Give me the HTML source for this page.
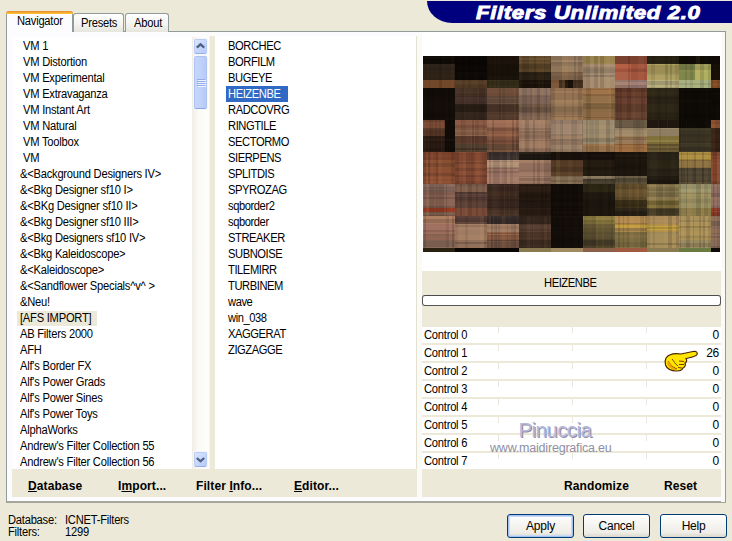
<!DOCTYPE html>
<html><head><meta charset="utf-8"><style>
*{margin:0;padding:0;box-sizing:border-box}
html,body{width:732px;height:541px;overflow:hidden;background:#ECE9D8;font-family:"Liberation Sans",sans-serif;font-size:12px;letter-spacing:-0.25px;color:#000}
.a{position:absolute}
.pv i{position:absolute;display:block}
.banner{position:absolute;left:427px;top:1px;width:305px;height:22px;background:#00007E;border-bottom-left-radius:25px 22px}
.btitle{position:absolute;left:476px;top:0.5px;height:24px;line-height:24px;color:#fff;font-weight:bold;font-style:italic;font-size:19px;white-space:nowrap;letter-spacing:0.5px;transform:scaleX(1.175);transform-origin:0 50%;-webkit-text-stroke:0.9px #fff}
.pane{position:absolute;left:6px;top:31px;width:720px;height:472px;background:#FCFCFE;border:1px solid #919B9C;border-bottom:2px solid #A7A69C}
.tab{position:absolute;top:13px;height:19px;border:1px solid #919B9C;border-bottom:none;border-radius:3px 3px 0 0;background:linear-gradient(#FFFFFF,#F3F3EF 60%,#E6E5DE)}
.tabsel{position:absolute;left:6px;top:11px;width:67px;height:21px;background:#FCFCFE;border:1px solid #919B9C;border-bottom:none;border-top:none;border-radius:3px 3px 0 0}
.tabsel:before{content:"";position:absolute;left:-1px;right:-1px;top:0;height:3px;background:linear-gradient(#E68B2C,#FFC83C);border-radius:3px 3px 0 0}
.tt{position:absolute;white-space:nowrap;line-height:13px;transform:scaleX(0.93);transform-origin:0 0}
.list{position:absolute;background:#fff}
.li{position:absolute;white-space:nowrap;line-height:16px;height:16px;transform:scaleX(0.93);transform-origin:0 0}
.m{left:228px;letter-spacing:-0.45px}
.sel{position:absolute;left:226px;width:62px;height:16px;background:#316AC5}
.sel2{position:absolute;left:17px;width:80px;height:15px;background:#ECE9D8}
.track{position:absolute;left:192px;top:37px;width:17px;height:432px;background:linear-gradient(90deg,#F0EEE6,#FBFAF6 40%,#FEFEFB)}
.sbtn{position:absolute;left:194px;width:13px;height:15px;box-shadow:0 0 0 1px #F4F6FC;border:1px solid #B9CCF6;border-bottom-color:#98B0EA;border-radius:2px;background:linear-gradient(135deg,#DCE6FE,#C3D4FB 60%,#B8CCF8)}
.thumb{position:absolute;left:194px;top:56px;width:13px;height:53px;box-shadow:0 0 0 1px #F4F6FC;border:1px solid #B0C4F4;border-bottom-color:#8EA8E8;border-radius:2px;background:linear-gradient(90deg,#C6D6FC,#C0D2FB 50%,#B6CAF8)}
.b{font-weight:bold;position:absolute;white-space:nowrap;line-height:13px;letter-spacing:0.1px}
.u{text-decoration:underline}
.crow{position:absolute;left:422px;width:299px;height:16px;background:#fff}
.ctl{position:absolute;left:424px;line-height:16px;white-space:nowrap;transform:scaleX(0.93);transform-origin:0 0}
.cval{position:absolute;right:13px;line-height:16px;white-space:nowrap}
.btn{position:absolute;top:514px;width:67px;height:24px;border:1px solid #003C74;border-radius:3px;background:linear-gradient(#FFFFFF,#F6F5F1 40%,#EEEDE7 80%,#DCD7CC);text-align:center;line-height:23px}
</style></head><body>
<div class="banner"></div>
<div class="btitle">Filters Unlimited 2.0</div>

<div class="pane"></div>
<div class="tab" style="left:73px;width:51px"></div>
<div class="tab" style="left:125px;width:44px"></div>
<div class="tabsel"></div>
<div class="tt" style="left:17px;top:15px">Navigator</div>
<div class="tt" style="left:81px;top:17px">Presets</div>
<div class="tt" style="left:134px;top:17px">About</div>

<div class="list" style="left:13px;top:37px;width:196px;height:432px"></div>
<div class="li" style="top:38px;left:23px">VM 1</div>
<div class="li" style="top:54px;left:23px">VM Distortion</div>
<div class="li" style="top:70px;left:23px">VM Experimental</div>
<div class="li" style="top:86px;left:23px">VM Extravaganza</div>
<div class="li" style="top:102px;left:23px">VM Instant Art</div>
<div class="li" style="top:118px;left:23px">VM Natural</div>
<div class="li" style="top:134px;left:23px">VM Toolbox</div>
<div class="li" style="top:150px;left:23px">VM</div>
<div class="li" style="top:166px;left:20px">&amp;&lt;Background Designers IV&gt;</div>
<div class="li" style="top:182px;left:20px">&amp;&lt;Bkg Designer sf10 I&gt;</div>
<div class="li" style="top:198px;left:20px">&amp;&lt;BKg Designer sf10 II&gt;</div>
<div class="li" style="top:214px;left:20px">&amp;&lt;Bkg Designer sf10 III&gt;</div>
<div class="li" style="top:230px;left:20px">&amp;&lt;Bkg Designers sf10 IV&gt;</div>
<div class="li" style="top:246px;left:20px">&amp;&lt;Bkg Kaleidoscope&gt;</div>
<div class="li" style="top:262px;left:20px">&amp;&lt;Kaleidoscope&gt;</div>
<div class="li" style="top:278px;left:20px">&amp;&lt;Sandflower Specials^v^ &gt;</div>
<div class="li" style="top:294px;left:20px">&amp;Neu!</div>
<div class="sel2" style="top:311px"></div>
<div class="li" style="top:310px;left:20px">[AFS IMPORT]</div>
<div class="li" style="top:326px;left:20px">AB Filters 2000</div>
<div class="li" style="top:342px;left:20px">AFH</div>
<div class="li" style="top:358px;left:20px">Alf's Border FX</div>
<div class="li" style="top:374px;left:20px">Alf's Power Grads</div>
<div class="li" style="top:390px;left:20px">Alf's Power Sines</div>
<div class="li" style="top:406px;left:20px">Alf's Power Toys</div>
<div class="li" style="top:422px;left:20px">AlphaWorks</div>
<div class="li" style="top:438px;left:20px">Andrew's Filter Collection 55</div>
<div class="li" style="top:454px;left:20px">Andrew's Filter Collection 56</div>
<div class="track"></div>
<div class="sbtn" style="top:39px"><svg width="18" height="16" style="position:absolute;left:-2px;top:-1px"><polyline points="3.8,8.6 7.5,5.3 11.2,8.6" fill="none" stroke="#4D6185" stroke-width="2.3"/></svg></div>
<div class="thumb"><div style="position:absolute;left:2px;top:22px;width:8px;height:1px;background:#94ADEA;box-shadow:1px 1px 0 #EEF3FE"></div><div style="position:absolute;left:2px;top:24px;width:8px;height:1px;background:#94ADEA;box-shadow:1px 1px 0 #EEF3FE"></div><div style="position:absolute;left:2px;top:26px;width:8px;height:1px;background:#94ADEA;box-shadow:1px 1px 0 #EEF3FE"></div><div style="position:absolute;left:2px;top:28px;width:8px;height:1px;background:#94ADEA;box-shadow:1px 1px 0 #EEF3FE"></div></div>
<div class="sbtn" style="top:452px"><svg width="18" height="16" style="position:absolute;left:-2px;top:-1px"><polyline points="3.8,6.0 7.5,9.3 11.2,6.0" fill="none" stroke="#4D6185" stroke-width="2.3"/></svg></div>

<div class="a" style="left:209px;top:36px;width:6px;height:433px;background:#ECE9D8"></div>
<div class="a" style="left:209px;top:36px;width:1px;height:433px;background:#F4F3EC"></div>

<div class="list" style="left:215px;top:36px;width:202px;height:433px"></div>
<div class="li m" style="top:38px">BORCHEC</div>
<div class="li m" style="top:54px">BORFILM</div>
<div class="li m" style="top:70px">BUGEYE</div>
<div class="sel" style="top:86px"></div>
<div class="li m" style="top:86px;color:#fff">HEIZENBE</div>
<div class="li m" style="top:102px">RADCOVRG</div>
<div class="li m" style="top:118px">RINGTILE</div>
<div class="li m" style="top:134px">SECTORMO</div>
<div class="li m" style="top:150px">SIERPENS</div>
<div class="li m" style="top:166px">SPLITDIS</div>
<div class="li m" style="top:182px">SPYROZAG</div>
<div class="li m" style="top:198px">sqborder2</div>
<div class="li m" style="top:214px">sqborder</div>
<div class="li m" style="top:230px">STREAKER</div>
<div class="li m" style="top:246px">SUBNOISE</div>
<div class="li m" style="top:262px">TILEMIRR</div>
<div class="li m" style="top:278px">TURBINEM</div>
<div class="li m" style="top:294px">wave</div>
<div class="li m" style="top:310px">win_038</div>
<div class="li m" style="top:326px">XAGGERAT</div>
<div class="li m" style="top:342px">ZIGZAGGE</div>
<div class="a" style="left:416px;top:36px;width:1px;height:433px;background:#E4E1D0"></div>

<div class="a" style="left:12px;top:469px;width:405px;height:28px;background:#ECE9D8"></div>
<div class="b" style="left:28px;top:480px"><span class="u">D</span>atabase</div>
<div class="b" style="left:118px;top:480px">I<span class="u">m</span>port...</div>
<div class="b" style="left:196px;top:480px">Filter <span class="u">I</span>nfo...</div>
<div class="b" style="left:294px;top:480px"><span class="u">E</span>ditor...</div>

<div class="a" style="left:417px;top:36px;width:6px;height:461px;background:#FAFAF6"></div>
<div class="a" style="left:422px;top:32px;width:299px;height:239px;background:#fff"></div>
<div class="a pv" style="left:423px;top:56px;width:297px;height:196px;background:#3a2a1c;overflow:hidden">
<i style="left:0px;top:0px;width:32px;height:8px;background:#0E0A06"></i><i style="left:0px;top:8px;width:32px;height:8px;background:#30241A"></i><i style="left:0px;top:16px;width:32px;height:8px;background:#2E2216"></i><i style="left:0px;top:24px;width:32px;height:8px;background:#72482A"></i><i style="left:0px;top:0px;width:32px;height:32px;background:linear-gradient(90deg,transparent 0px 2px,transparent 2px 5px,rgba(255,190,110,0.018) 5px 6px,rgba(0,0,0,0.08) 6px 7px,transparent 7px 11px,transparent 11px 15px,transparent 15px 16px,rgba(0,0,0,0.12) 16px 19px,transparent 19px 20px,rgba(255,190,110,0.018) 20px 21px,transparent 21px 24px,transparent 24px 28px,rgba(255,190,110,0.018) 28px 30px,rgba(255,190,110,0.018) 30px 31px,rgba(0,0,0,0.12) 31px 35px)"></i><i style="left:0px;top:0px;width:32px;height:32px;background:linear-gradient(180deg,transparent 0px 1px,rgba(255,190,110,0.018) 1px 2px,rgba(0,0,0,0.08) 2px 4px,transparent 4px 7px,transparent 7px 11px,rgba(0,0,0,0.08) 11px 15px,transparent 15px 19px,rgba(255,190,110,0.018) 19px 20px,transparent 20px 24px,transparent 24px 26px,transparent 26px 30px,transparent 30px 34px)"></i><i style="left:32px;top:0px;width:32px;height:16px;background:#0A0604"></i><i style="left:32px;top:16px;width:32px;height:8px;background:#0C0806"></i><i style="left:32px;top:24px;width:32px;height:8px;background:#5A4028"></i><i style="left:32px;top:0px;width:32px;height:32px;background:linear-gradient(90deg,transparent 0px 4px,rgba(255,190,110,0.009) 4px 7px,rgba(0,0,0,0.08) 7px 10px,rgba(255,190,110,0.009) 10px 13px,rgba(0,0,0,0.08) 13px 16px,transparent 16px 18px,transparent 18px 20px,rgba(255,190,110,0.009) 20px 21px,rgba(255,190,110,0.009) 21px 23px,rgba(0,0,0,0.08) 23px 26px,rgba(0,0,0,0.08) 26px 29px,transparent 29px 33px)"></i><i style="left:32px;top:0px;width:32px;height:32px;background:linear-gradient(180deg,rgba(255,190,110,0.009) 0px 1px,transparent 1px 4px,transparent 4px 6px,rgba(0,0,0,0.12) 6px 9px,transparent 9px 10px,rgba(255,190,110,0.009) 10px 14px,rgba(0,0,0,0.08) 14px 16px,rgba(255,190,110,0.009) 16px 18px,rgba(255,190,110,0.009) 18px 21px,transparent 21px 24px,rgba(0,0,0,0.08) 24px 25px,transparent 25px 28px,rgba(0,0,0,0.08) 28px 29px,rgba(0,0,0,0.12) 29px 33px)"></i><i style="left:64px;top:0px;width:32px;height:8px;background:#1E140C"></i><i style="left:64px;top:8px;width:32px;height:16px;background:#1A120A"></i><i style="left:64px;top:24px;width:32px;height:8px;background:#38301A"></i><i style="left:64px;top:0px;width:32px;height:32px;background:linear-gradient(90deg,rgba(0,0,0,0.12) 0px 2px,transparent 2px 4px,rgba(0,0,0,0.08) 4px 7px,rgba(255,190,110,0.009) 7px 9px,rgba(0,0,0,0.12) 9px 10px,transparent 10px 11px,transparent 11px 13px,rgba(0,0,0,0.12) 13px 15px,rgba(0,0,0,0.12) 15px 18px,transparent 18px 19px,rgba(0,0,0,0.12) 19px 22px,rgba(0,0,0,0.08) 22px 26px,rgba(0,0,0,0.12) 26px 28px,rgba(0,0,0,0.08) 28px 32px)"></i><i style="left:64px;top:0px;width:32px;height:32px;background:linear-gradient(180deg,rgba(0,0,0,0.08) 0px 3px,transparent 3px 6px,transparent 6px 8px,transparent 8px 10px,transparent 10px 12px,rgba(0,0,0,0.12) 12px 13px,transparent 13px 17px,rgba(0,0,0,0.08) 17px 19px,transparent 19px 20px,rgba(255,190,110,0.009) 20px 23px,rgba(255,190,110,0.009) 23px 25px,rgba(0,0,0,0.08) 25px 29px,rgba(255,190,110,0.009) 29px 31px,transparent 31px 35px)"></i><i style="left:96px;top:0px;width:32px;height:8px;background:#6A5030"></i><i style="left:96px;top:8px;width:32px;height:8px;background:#5A4428"></i><i style="left:96px;top:16px;width:32px;height:8px;background:#2A2014"></i><i style="left:96px;top:24px;width:32px;height:8px;background:#1A120A"></i><i style="left:96px;top:0px;width:32px;height:32px;background:linear-gradient(90deg,rgba(255,190,110,0.025) 0px 3px,rgba(0,0,0,0.12) 3px 6px,rgba(0,0,0,0.12) 6px 9px,rgba(0,0,0,0.12) 9px 10px,transparent 10px 13px,transparent 13px 15px,rgba(0,0,0,0.12) 15px 17px,transparent 17px 19px,rgba(255,190,110,0.025) 19px 21px,transparent 21px 22px,rgba(255,190,110,0.025) 22px 23px,rgba(255,190,110,0.025) 23px 25px,rgba(0,0,0,0.08) 25px 26px,transparent 26px 30px,transparent 30px 31px,rgba(0,0,0,0.12) 31px 35px)"></i><i style="left:96px;top:0px;width:32px;height:32px;background:linear-gradient(180deg,rgba(0,0,0,0.08) 0px 2px,rgba(255,190,110,0.025) 2px 4px,rgba(0,0,0,0.12) 4px 6px,transparent 6px 7px,rgba(0,0,0,0.12) 7px 10px,rgba(0,0,0,0.12) 10px 13px,transparent 13px 15px,transparent 15px 17px,rgba(0,0,0,0.08) 17px 19px,transparent 19px 22px,transparent 22px 26px,rgba(255,190,110,0.025) 26px 28px,transparent 28px 30px,transparent 30px 34px)"></i><i style="left:128px;top:0px;width:32px;height:8px;background:#9C8064"></i><i style="left:128px;top:8px;width:32px;height:8px;background:#9A7E60"></i><i style="left:128px;top:16px;width:32px;height:8px;background:#7A6048"></i><i style="left:128px;top:24px;width:32px;height:8px;background:#4A3422"></i><i style="left:128px;top:24px;width:8px;height:8px;background:#8A6040"></i><i style="left:142px;top:24px;width:8px;height:8px;background:#1A1008"></i><i style="left:128px;top:0px;width:32px;height:32px;background:linear-gradient(90deg,rgba(0,0,0,0.08) 0px 4px,rgba(0,0,0,0.08) 4px 5px,rgba(0,0,0,0.08) 5px 9px,rgba(0,0,0,0.08) 9px 11px,rgba(255,190,110,0.06) 11px 13px,rgba(255,190,110,0.06) 13px 17px,transparent 17px 19px,transparent 19px 23px,rgba(0,0,0,0.12) 23px 25px,transparent 25px 27px,rgba(0,0,0,0.12) 27px 31px,transparent 31px 33px)"></i><i style="left:128px;top:0px;width:32px;height:32px;background:linear-gradient(180deg,rgba(0,0,0,0.08) 0px 1px,rgba(0,0,0,0.08) 1px 4px,rgba(255,190,110,0.06) 4px 6px,rgba(0,0,0,0.12) 6px 8px,rgba(0,0,0,0.08) 8px 10px,transparent 10px 11px,transparent 11px 12px,transparent 12px 15px,transparent 15px 17px,rgba(255,190,110,0.06) 17px 20px,transparent 20px 24px,rgba(0,0,0,0.08) 24px 27px,transparent 27px 28px,transparent 28px 31px,transparent 31px 34px)"></i><i style="left:160px;top:0px;width:32px;height:8px;background:#9A8450"></i><i style="left:160px;top:8px;width:32px;height:16px;background:#A48C72"></i><i style="left:160px;top:24px;width:32px;height:8px;background:#A28A70"></i><i style="left:160px;top:0px;width:32px;height:32px;background:linear-gradient(90deg,rgba(0,0,0,0.08) 0px 3px,rgba(0,0,0,0.12) 3px 4px,rgba(0,0,0,0.12) 4px 7px,transparent 7px 8px,transparent 8px 10px,transparent 10px 11px,rgba(0,0,0,0.12) 11px 15px,rgba(255,190,110,0.06) 15px 17px,rgba(0,0,0,0.12) 17px 21px,transparent 21px 23px,rgba(255,190,110,0.06) 23px 27px,transparent 27px 29px,transparent 29px 30px,transparent 30px 34px)"></i><i style="left:160px;top:0px;width:32px;height:32px;background:linear-gradient(180deg,transparent 0px 3px,transparent 3px 5px,transparent 5px 7px,rgba(255,190,110,0.06) 7px 9px,rgba(255,190,110,0.06) 9px 11px,rgba(0,0,0,0.08) 11px 13px,rgba(0,0,0,0.12) 13px 17px,transparent 17px 19px,rgba(0,0,0,0.12) 19px 21px,rgba(255,190,110,0.06) 21px 25px,rgba(255,190,110,0.06) 25px 28px,rgba(255,190,110,0.06) 28px 30px,rgba(255,190,110,0.06) 30px 32px)"></i><i style="left:192px;top:0px;width:32px;height:8px;background:#7A4030"></i><i style="left:192px;top:8px;width:32px;height:8px;background:#B05A42"></i><i style="left:192px;top:16px;width:32px;height:8px;background:#A85A46"></i><i style="left:192px;top:24px;width:32px;height:8px;background:#A48072"></i><i style="left:208px;top:8px;width:16px;height:16px;background:#9A4C3A"></i><i style="left:208px;top:24px;width:16px;height:8px;background:#9A7A76"></i><i style="left:192px;top:0px;width:32px;height:32px;background:linear-gradient(90deg,transparent 0px 4px,transparent 4px 7px,transparent 7px 11px,transparent 11px 13px,rgba(0,0,0,0.12) 13px 15px,transparent 15px 19px,transparent 19px 23px,rgba(255,190,110,0.06) 23px 25px,rgba(255,190,110,0.06) 25px 29px,transparent 29px 32px)"></i><i style="left:192px;top:0px;width:32px;height:32px;background:linear-gradient(180deg,transparent 0px 4px,transparent 4px 6px,transparent 6px 8px,rgba(255,190,110,0.06) 8px 9px,rgba(255,190,110,0.06) 9px 12px,transparent 12px 13px,rgba(0,0,0,0.08) 13px 16px,rgba(255,190,110,0.06) 16px 20px,rgba(255,190,110,0.06) 20px 24px,rgba(0,0,0,0.08) 24px 26px,rgba(255,190,110,0.06) 26px 29px,rgba(0,0,0,0.12) 29px 33px)"></i><i style="left:224px;top:0px;width:32px;height:8px;background:#2A2414"></i><i style="left:224px;top:8px;width:32px;height:8px;background:#B0A060"></i><i style="left:224px;top:16px;width:32px;height:8px;background:#AEA062"></i><i style="left:224px;top:24px;width:32px;height:8px;background:#B6AE7E"></i><i style="left:224px;top:0px;width:32px;height:32px;background:linear-gradient(90deg,transparent 0px 4px,rgba(0,0,0,0.08) 4px 8px,transparent 8px 12px,transparent 12px 15px,transparent 15px 18px,rgba(0,0,0,0.12) 18px 21px,transparent 21px 23px,rgba(0,0,0,0.12) 23px 25px,transparent 25px 26px,transparent 26px 28px,rgba(0,0,0,0.08) 28px 30px,rgba(0,0,0,0.08) 30px 32px)"></i><i style="left:224px;top:0px;width:32px;height:32px;background:linear-gradient(180deg,rgba(0,0,0,0.12) 0px 2px,transparent 2px 4px,rgba(0,0,0,0.12) 4px 7px,transparent 7px 9px,rgba(0,0,0,0.12) 9px 11px,rgba(0,0,0,0.12) 11px 15px,rgba(0,0,0,0.12) 15px 17px,rgba(0,0,0,0.08) 17px 19px,transparent 19px 21px,transparent 21px 23px,rgba(255,190,110,0.06) 23px 25px,rgba(0,0,0,0.12) 25px 28px,rgba(0,0,0,0.12) 28px 29px,rgba(255,190,110,0.06) 29px 31px,rgba(0,0,0,0.08) 31px 35px)"></i><i style="left:256px;top:0px;width:32px;height:8px;background:#100C06"></i><i style="left:256px;top:8px;width:32px;height:8px;background:#9CA058"></i><i style="left:256px;top:16px;width:32px;height:8px;background:#9CA05A"></i><i style="left:256px;top:24px;width:32px;height:8px;background:#A8B080"></i><i style="left:256px;top:8px;width:16px;height:16px;background:#7E864A"></i><i style="left:272px;top:8px;width:16px;height:16px;background:#B0B062"></i><i style="left:256px;top:0px;width:32px;height:32px;background:linear-gradient(90deg,transparent 0px 4px,transparent 4px 5px,transparent 5px 6px,rgba(0,0,0,0.08) 6px 8px,transparent 8px 9px,transparent 9px 11px,rgba(0,0,0,0.08) 11px 14px,transparent 14px 17px,rgba(255,190,110,0.06) 17px 21px,rgba(0,0,0,0.12) 21px 25px,transparent 25px 27px,transparent 27px 29px,rgba(0,0,0,0.12) 29px 31px,rgba(0,0,0,0.08) 31px 32px)"></i><i style="left:256px;top:0px;width:32px;height:32px;background:linear-gradient(180deg,transparent 0px 1px,transparent 1px 3px,transparent 3px 7px,rgba(0,0,0,0.08) 7px 8px,rgba(0,0,0,0.12) 8px 9px,rgba(0,0,0,0.08) 9px 10px,rgba(0,0,0,0.12) 10px 14px,rgba(255,190,110,0.06) 14px 16px,transparent 16px 18px,transparent 18px 22px,transparent 22px 23px,transparent 23px 25px,transparent 25px 27px,rgba(0,0,0,0.08) 27px 29px,transparent 29px 33px)"></i><i style="left:288px;top:0px;width:32px;height:8px;background:#120C06"></i><i style="left:288px;top:8px;width:32px;height:16px;background:#1A1008"></i><i style="left:288px;top:24px;width:32px;height:8px;background:#8A5028"></i><i style="left:288px;top:0px;width:32px;height:32px;background:linear-gradient(90deg,rgba(0,0,0,0.12) 0px 2px,transparent 2px 6px,rgba(0,0,0,0.08) 6px 8px,rgba(0,0,0,0.08) 8px 9px,transparent 9px 10px,rgba(255,190,110,0.013) 10px 11px,transparent 11px 15px,rgba(0,0,0,0.12) 15px 19px,rgba(0,0,0,0.12) 19px 21px,rgba(0,0,0,0.12) 21px 22px,rgba(255,190,110,0.013) 22px 25px,rgba(255,190,110,0.013) 25px 28px,transparent 28px 30px,rgba(0,0,0,0.08) 30px 32px)"></i><i style="left:288px;top:0px;width:32px;height:32px;background:linear-gradient(180deg,transparent 0px 2px,rgba(0,0,0,0.08) 2px 5px,transparent 5px 6px,transparent 6px 7px,rgba(0,0,0,0.12) 7px 9px,transparent 9px 11px,rgba(0,0,0,0.12) 11px 12px,rgba(0,0,0,0.08) 12px 16px,transparent 16px 20px,transparent 20px 22px,transparent 22px 25px,rgba(0,0,0,0.08) 25px 27px,transparent 27px 30px,rgba(0,0,0,0.08) 30px 32px)"></i><i style="left:0px;top:32px;width:32px;height:32px;background:#120C08"></i><i style="left:0px;top:32px;width:32px;height:32px;background:linear-gradient(90deg,rgba(255,190,110,0.009) 0px 2px,transparent 2px 4px,rgba(0,0,0,0.08) 4px 5px,rgba(0,0,0,0.08) 5px 7px,transparent 7px 9px,rgba(0,0,0,0.12) 9px 11px,rgba(0,0,0,0.12) 11px 12px,rgba(255,190,110,0.009) 12px 14px,transparent 14px 16px,transparent 16px 20px,rgba(0,0,0,0.08) 20px 21px,transparent 21px 22px,rgba(255,190,110,0.009) 22px 25px,rgba(0,0,0,0.12) 25px 26px,rgba(0,0,0,0.08) 26px 27px,transparent 27px 29px,rgba(255,190,110,0.009) 29px 30px,transparent 30px 34px)"></i><i style="left:0px;top:32px;width:32px;height:32px;background:linear-gradient(180deg,rgba(0,0,0,0.12) 0px 4px,rgba(0,0,0,0.12) 4px 6px,rgba(0,0,0,0.08) 6px 8px,transparent 8px 12px,rgba(255,190,110,0.009) 12px 13px,rgba(255,190,110,0.009) 13px 16px,rgba(255,190,110,0.009) 16px 18px,rgba(255,190,110,0.009) 18px 22px,rgba(255,190,110,0.009) 22px 23px,transparent 23px 25px,transparent 25px 26px,rgba(0,0,0,0.08) 26px 28px,rgba(0,0,0,0.12) 28px 29px,rgba(255,190,110,0.009) 29px 32px)"></i><i style="left:32px;top:32px;width:32px;height:8px;background:#4A3428"></i><i style="left:32px;top:40px;width:32px;height:8px;background:#44302A"></i><i style="left:32px;top:48px;width:32px;height:8px;background:#2A1E16"></i><i style="left:32px;top:56px;width:32px;height:8px;background:#3A2A20"></i><i style="left:32px;top:32px;width:32px;height:32px;background:linear-gradient(90deg,transparent 0px 1px,transparent 1px 5px,rgba(0,0,0,0.08) 5px 8px,rgba(0,0,0,0.12) 8px 9px,rgba(255,190,110,0.023) 9px 10px,transparent 10px 14px,transparent 14px 18px,rgba(0,0,0,0.08) 18px 21px,rgba(0,0,0,0.08) 21px 22px,transparent 22px 24px,rgba(0,0,0,0.12) 24px 26px,rgba(0,0,0,0.12) 26px 29px,rgba(0,0,0,0.12) 29px 30px,transparent 30px 32px)"></i><i style="left:32px;top:32px;width:32px;height:32px;background:linear-gradient(180deg,transparent 0px 4px,rgba(255,190,110,0.023) 4px 5px,rgba(0,0,0,0.08) 5px 7px,rgba(0,0,0,0.08) 7px 9px,rgba(255,190,110,0.023) 9px 13px,transparent 13px 15px,transparent 15px 18px,rgba(0,0,0,0.08) 18px 21px,transparent 21px 22px,rgba(0,0,0,0.08) 22px 25px,rgba(0,0,0,0.08) 25px 29px,rgba(0,0,0,0.12) 29px 32px)"></i><i style="left:64px;top:32px;width:32px;height:8px;background:#7A5440"></i><i style="left:64px;top:40px;width:32px;height:8px;background:#6A5040"></i><i style="left:64px;top:48px;width:32px;height:8px;background:#4A3428"></i><i style="left:64px;top:56px;width:32px;height:8px;background:#5A4030"></i><i style="left:64px;top:32px;width:32px;height:32px;background:linear-gradient(90deg,transparent 0px 3px,transparent 3px 7px,transparent 7px 9px,transparent 9px 12px,rgba(0,0,0,0.12) 12px 14px,rgba(255,190,110,0.044) 14px 15px,rgba(0,0,0,0.08) 15px 18px,transparent 18px 21px,transparent 21px 23px,transparent 23px 27px,rgba(255,190,110,0.044) 27px 29px,rgba(0,0,0,0.08) 29px 31px,rgba(255,190,110,0.044) 31px 33px)"></i><i style="left:64px;top:32px;width:32px;height:32px;background:linear-gradient(180deg,rgba(0,0,0,0.08) 0px 4px,rgba(0,0,0,0.08) 4px 5px,rgba(0,0,0,0.12) 5px 7px,rgba(0,0,0,0.12) 7px 10px,transparent 10px 11px,rgba(0,0,0,0.12) 11px 12px,rgba(0,0,0,0.12) 12px 15px,transparent 15px 17px,rgba(0,0,0,0.08) 17px 20px,rgba(0,0,0,0.08) 20px 23px,rgba(0,0,0,0.08) 23px 24px,rgba(0,0,0,0.08) 24px 25px,rgba(0,0,0,0.12) 25px 27px,transparent 27px 28px,rgba(0,0,0,0.08) 28px 29px,rgba(0,0,0,0.08) 29px 31px,rgba(0,0,0,0.12) 31px 32px)"></i><i style="left:96px;top:32px;width:32px;height:8px;background:#8A7060"></i><i style="left:96px;top:40px;width:32px;height:8px;background:#84685A"></i><i style="left:96px;top:48px;width:32px;height:8px;background:#6E5646"></i><i style="left:96px;top:56px;width:32px;height:8px;background:#7A6050"></i><i style="left:96px;top:32px;width:32px;height:32px;background:linear-gradient(90deg,rgba(255,190,110,0.06) 0px 3px,rgba(0,0,0,0.08) 3px 4px,rgba(0,0,0,0.08) 4px 7px,rgba(0,0,0,0.08) 7px 8px,transparent 8px 9px,transparent 9px 11px,rgba(0,0,0,0.08) 11px 13px,rgba(255,190,110,0.06) 13px 16px,transparent 16px 18px,rgba(0,0,0,0.12) 18px 20px,rgba(0,0,0,0.12) 20px 21px,rgba(255,190,110,0.06) 21px 25px,transparent 25px 27px,rgba(0,0,0,0.12) 27px 28px,rgba(255,190,110,0.06) 28px 31px,rgba(0,0,0,0.08) 31px 33px)"></i><i style="left:96px;top:32px;width:32px;height:32px;background:linear-gradient(180deg,transparent 0px 3px,transparent 3px 7px,rgba(0,0,0,0.12) 7px 9px,rgba(0,0,0,0.08) 9px 12px,rgba(0,0,0,0.08) 12px 14px,rgba(0,0,0,0.08) 14px 16px,transparent 16px 19px,rgba(0,0,0,0.12) 19px 21px,rgba(0,0,0,0.12) 21px 25px,transparent 25px 26px,transparent 26px 28px,rgba(255,190,110,0.06) 28px 30px,rgba(255,190,110,0.06) 30px 33px)"></i><i style="left:128px;top:32px;width:32px;height:8px;background:#A07A58"></i><i style="left:128px;top:40px;width:32px;height:8px;background:#9E7C5A"></i><i style="left:128px;top:48px;width:32px;height:8px;background:#987856"></i><i style="left:128px;top:56px;width:32px;height:8px;background:#9A7856"></i><i style="left:128px;top:32px;width:32px;height:32px;background:linear-gradient(90deg,rgba(0,0,0,0.12) 0px 2px,rgba(0,0,0,0.12) 2px 4px,transparent 4px 7px,transparent 7px 11px,transparent 11px 13px,rgba(0,0,0,0.08) 13px 15px,transparent 15px 19px,transparent 19px 21px,rgba(0,0,0,0.08) 21px 23px,transparent 23px 27px,rgba(0,0,0,0.12) 27px 28px,rgba(0,0,0,0.12) 28px 31px,transparent 31px 35px)"></i><i style="left:128px;top:32px;width:32px;height:32px;background:linear-gradient(180deg,rgba(0,0,0,0.08) 0px 3px,transparent 3px 5px,rgba(0,0,0,0.08) 5px 8px,rgba(0,0,0,0.08) 8px 12px,rgba(255,190,110,0.06) 12px 14px,transparent 14px 18px,rgba(0,0,0,0.08) 18px 19px,rgba(0,0,0,0.12) 19px 21px,rgba(0,0,0,0.12) 21px 24px,rgba(0,0,0,0.08) 24px 27px,transparent 27px 28px,rgba(0,0,0,0.12) 28px 29px,rgba(255,190,110,0.06) 29px 32px)"></i><i style="left:160px;top:32px;width:32px;height:8px;background:#9A7048"></i><i style="left:160px;top:40px;width:32px;height:8px;background:#947048"></i><i style="left:160px;top:48px;width:32px;height:8px;background:#8A6A44"></i><i style="left:160px;top:56px;width:32px;height:8px;background:#906C46"></i><i style="left:160px;top:32px;width:32px;height:32px;background:linear-gradient(90deg,transparent 0px 3px,rgba(0,0,0,0.12) 3px 4px,rgba(0,0,0,0.12) 4px 8px,transparent 8px 11px,transparent 11px 12px,transparent 12px 14px,transparent 14px 18px,transparent 18px 21px,transparent 21px 25px,transparent 25px 26px,rgba(255,190,110,0.06) 26px 28px,rgba(0,0,0,0.08) 28px 29px,rgba(0,0,0,0.08) 29px 31px,rgba(0,0,0,0.12) 31px 35px)"></i><i style="left:160px;top:32px;width:32px;height:32px;background:linear-gradient(180deg,transparent 0px 1px,rgba(0,0,0,0.08) 1px 2px,rgba(255,190,110,0.06) 2px 6px,rgba(0,0,0,0.12) 6px 8px,transparent 8px 10px,transparent 10px 14px,rgba(255,190,110,0.06) 14px 15px,rgba(0,0,0,0.12) 15px 17px,rgba(0,0,0,0.08) 17px 19px,rgba(0,0,0,0.12) 19px 21px,transparent 21px 25px,transparent 25px 29px,rgba(0,0,0,0.12) 29px 30px,transparent 30px 32px)"></i><i style="left:192px;top:32px;width:32px;height:8px;background:#6A3E2C"></i><i style="left:192px;top:40px;width:32px;height:8px;background:#6A4030"></i><i style="left:192px;top:48px;width:32px;height:8px;background:#5E3A2A"></i><i style="left:192px;top:56px;width:32px;height:8px;background:#6A4432"></i><i style="left:192px;top:32px;width:32px;height:32px;background:linear-gradient(90deg,transparent 0px 1px,rgba(0,0,0,0.12) 1px 4px,rgba(0,0,0,0.08) 4px 5px,rgba(0,0,0,0.12) 5px 7px,transparent 7px 9px,transparent 9px 12px,rgba(0,0,0,0.12) 12px 14px,rgba(0,0,0,0.12) 14px 16px,transparent 16px 18px,rgba(255,190,110,0.042) 18px 20px,transparent 20px 21px,transparent 21px 24px,transparent 24px 26px,rgba(0,0,0,0.12) 26px 28px,rgba(0,0,0,0.08) 28px 30px,transparent 30px 32px)"></i><i style="left:192px;top:32px;width:32px;height:32px;background:linear-gradient(180deg,rgba(0,0,0,0.12) 0px 4px,transparent 4px 8px,rgba(0,0,0,0.12) 8px 10px,transparent 10px 13px,transparent 13px 17px,transparent 17px 20px,transparent 20px 22px,transparent 22px 26px,transparent 26px 29px,transparent 29px 30px,rgba(0,0,0,0.12) 30px 33px)"></i><i style="left:224px;top:32px;width:32px;height:8px;background:#2E2818"></i><i style="left:224px;top:40px;width:32px;height:8px;background:#2A2216"></i><i style="left:224px;top:48px;width:32px;height:8px;background:#2E2818"></i><i style="left:224px;top:56px;width:32px;height:8px;background:#2A2416"></i><i style="left:224px;top:32px;width:32px;height:32px;background:linear-gradient(90deg,transparent 0px 2px,transparent 2px 3px,transparent 3px 5px,rgba(255,190,110,0.015) 5px 7px,transparent 7px 10px,rgba(0,0,0,0.12) 10px 12px,rgba(0,0,0,0.08) 12px 14px,transparent 14px 17px,transparent 17px 18px,rgba(0,0,0,0.08) 18px 19px,rgba(0,0,0,0.08) 19px 20px,transparent 20px 23px,transparent 23px 27px,rgba(0,0,0,0.08) 27px 30px,rgba(0,0,0,0.12) 30px 32px)"></i><i style="left:224px;top:32px;width:32px;height:32px;background:linear-gradient(180deg,transparent 0px 1px,transparent 1px 4px,rgba(255,190,110,0.015) 4px 6px,transparent 6px 9px,rgba(0,0,0,0.08) 9px 11px,transparent 11px 14px,transparent 14px 17px,transparent 17px 20px,transparent 20px 23px,transparent 23px 26px,rgba(0,0,0,0.08) 26px 27px,transparent 27px 29px,rgba(0,0,0,0.08) 29px 33px)"></i><i style="left:256px;top:32px;width:32px;height:32px;background:#0E0A06"></i><i style="left:256px;top:32px;width:32px;height:32px;background:linear-gradient(90deg,rgba(0,0,0,0.08) 0px 2px,rgba(255,190,110,0.009) 2px 4px,rgba(0,0,0,0.08) 4px 5px,rgba(0,0,0,0.08) 5px 7px,transparent 7px 9px,transparent 9px 13px,transparent 13px 14px,rgba(0,0,0,0.12) 14px 15px,rgba(0,0,0,0.12) 15px 18px,rgba(0,0,0,0.12) 18px 20px,transparent 20px 23px,transparent 23px 26px,rgba(0,0,0,0.08) 26px 27px,rgba(255,190,110,0.009) 27px 29px,rgba(0,0,0,0.08) 29px 31px,rgba(0,0,0,0.12) 31px 33px)"></i><i style="left:256px;top:32px;width:32px;height:32px;background:linear-gradient(180deg,rgba(255,190,110,0.009) 0px 2px,rgba(255,190,110,0.009) 2px 3px,rgba(0,0,0,0.12) 3px 5px,transparent 5px 7px,transparent 7px 10px,rgba(0,0,0,0.12) 10px 11px,rgba(255,190,110,0.009) 11px 15px,transparent 15px 17px,transparent 17px 20px,rgba(0,0,0,0.08) 20px 21px,transparent 21px 25px,transparent 25px 27px,rgba(0,0,0,0.12) 27px 30px,transparent 30px 33px)"></i><i style="left:288px;top:32px;width:32px;height:32px;background:#0E0A06"></i><i style="left:288px;top:32px;width:32px;height:32px;background:linear-gradient(90deg,transparent 0px 2px,rgba(0,0,0,0.12) 2px 5px,transparent 5px 9px,transparent 9px 13px,rgba(0,0,0,0.08) 13px 15px,rgba(255,190,110,0.009) 15px 17px,rgba(0,0,0,0.08) 17px 19px,rgba(0,0,0,0.08) 19px 21px,rgba(0,0,0,0.12) 21px 23px,transparent 23px 25px,transparent 25px 27px,rgba(0,0,0,0.08) 27px 29px,transparent 29px 33px)"></i><i style="left:288px;top:32px;width:32px;height:32px;background:linear-gradient(180deg,transparent 0px 2px,rgba(0,0,0,0.08) 2px 5px,rgba(255,190,110,0.009) 5px 7px,transparent 7px 11px,rgba(0,0,0,0.12) 11px 12px,transparent 12px 13px,rgba(0,0,0,0.12) 13px 14px,rgba(0,0,0,0.12) 14px 16px,transparent 16px 18px,transparent 18px 20px,transparent 20px 21px,rgba(255,190,110,0.009) 21px 23px,transparent 23px 27px,rgba(0,0,0,0.08) 27px 28px,transparent 28px 32px)"></i><i style="left:0px;top:64px;width:32px;height:8px;background:#7A4A34"></i><i style="left:0px;top:72px;width:32px;height:8px;background:#5A3A28"></i><i style="left:0px;top:80px;width:32px;height:16px;background:#2A1A12"></i><i style="left:22px;top:64px;width:10px;height:32px;background:#120C08"></i><i style="left:0px;top:64px;width:32px;height:32px;background:linear-gradient(90deg,rgba(255,190,110,0.027) 0px 3px,transparent 3px 5px,rgba(255,190,110,0.027) 5px 6px,rgba(0,0,0,0.08) 6px 10px,transparent 10px 12px,rgba(0,0,0,0.08) 12px 14px,transparent 14px 16px,rgba(0,0,0,0.08) 16px 18px,rgba(255,190,110,0.027) 18px 19px,transparent 19px 21px,rgba(0,0,0,0.12) 21px 23px,transparent 23px 25px,rgba(0,0,0,0.08) 25px 29px,transparent 29px 30px,rgba(0,0,0,0.12) 30px 31px,rgba(0,0,0,0.12) 31px 35px)"></i><i style="left:0px;top:64px;width:32px;height:32px;background:linear-gradient(180deg,rgba(0,0,0,0.12) 0px 1px,rgba(0,0,0,0.12) 1px 2px,transparent 2px 6px,transparent 6px 10px,rgba(0,0,0,0.12) 10px 12px,rgba(0,0,0,0.12) 12px 14px,rgba(0,0,0,0.08) 14px 16px,transparent 16px 19px,rgba(255,190,110,0.027) 19px 21px,rgba(0,0,0,0.12) 21px 23px,transparent 23px 26px,transparent 26px 28px,rgba(0,0,0,0.12) 28px 31px,transparent 31px 33px)"></i><i style="left:32px;top:64px;width:32px;height:8px;background:#8A5A44"></i><i style="left:32px;top:72px;width:32px;height:8px;background:#8A6048"></i><i style="left:32px;top:80px;width:32px;height:8px;background:#5A3A2C"></i><i style="left:32px;top:88px;width:32px;height:8px;background:#4A3A2C"></i><i style="left:32px;top:64px;width:32px;height:32px;background:linear-gradient(90deg,transparent 0px 3px,transparent 3px 6px,rgba(0,0,0,0.12) 6px 7px,rgba(0,0,0,0.08) 7px 11px,transparent 11px 14px,transparent 14px 16px,rgba(255,190,110,0.049) 16px 17px,rgba(0,0,0,0.12) 17px 19px,rgba(255,190,110,0.049) 19px 20px,rgba(0,0,0,0.08) 20px 24px,transparent 24px 28px,rgba(0,0,0,0.08) 28px 30px,transparent 30px 32px)"></i><i style="left:32px;top:64px;width:32px;height:32px;background:linear-gradient(180deg,transparent 0px 4px,transparent 4px 5px,rgba(0,0,0,0.12) 5px 8px,rgba(0,0,0,0.08) 8px 10px,transparent 10px 12px,rgba(0,0,0,0.08) 12px 15px,rgba(255,190,110,0.049) 15px 16px,transparent 16px 19px,transparent 19px 23px,rgba(255,190,110,0.049) 23px 25px,rgba(255,190,110,0.049) 25px 28px,rgba(0,0,0,0.12) 28px 30px,rgba(255,190,110,0.049) 30px 32px)"></i><i style="left:64px;top:64px;width:32px;height:8px;background:#9A6A54"></i><i style="left:64px;top:72px;width:32px;height:8px;background:#8A5A44"></i><i style="left:64px;top:80px;width:32px;height:8px;background:#7A4E3C"></i><i style="left:64px;top:88px;width:32px;height:8px;background:#6A4A38"></i><i style="left:64px;top:64px;width:32px;height:32px;background:linear-gradient(90deg,transparent 0px 2px,rgba(255,190,110,0.06) 2px 5px,rgba(0,0,0,0.12) 5px 7px,transparent 7px 9px,transparent 9px 11px,transparent 11px 13px,transparent 13px 17px,transparent 17px 19px,rgba(255,190,110,0.06) 19px 22px,rgba(255,190,110,0.06) 22px 25px,rgba(0,0,0,0.12) 25px 27px,rgba(255,190,110,0.06) 27px 29px,rgba(0,0,0,0.12) 29px 31px,rgba(0,0,0,0.08) 31px 34px)"></i><i style="left:64px;top:64px;width:32px;height:32px;background:linear-gradient(180deg,rgba(255,190,110,0.06) 0px 3px,transparent 3px 6px,transparent 6px 7px,rgba(0,0,0,0.12) 7px 11px,transparent 11px 14px,rgba(255,190,110,0.06) 14px 17px,transparent 17px 20px,rgba(0,0,0,0.12) 20px 23px,transparent 23px 24px,rgba(0,0,0,0.08) 24px 26px,rgba(0,0,0,0.08) 26px 29px,rgba(0,0,0,0.12) 29px 30px,rgba(255,190,110,0.06) 30px 34px)"></i><i style="left:96px;top:64px;width:32px;height:8px;background:#9E7C66"></i><i style="left:96px;top:72px;width:32px;height:8px;background:#9A7862"></i><i style="left:96px;top:80px;width:32px;height:8px;background:#987660"></i><i style="left:96px;top:88px;width:32px;height:8px;background:#9A7862"></i><i style="left:96px;top:64px;width:32px;height:32px;background:linear-gradient(90deg,transparent 0px 1px,transparent 1px 3px,rgba(255,190,110,0.06) 3px 5px,transparent 5px 6px,rgba(0,0,0,0.12) 6px 10px,transparent 10px 12px,rgba(255,190,110,0.06) 12px 13px,transparent 13px 14px,rgba(0,0,0,0.12) 14px 16px,transparent 16px 18px,transparent 18px 20px,rgba(255,190,110,0.06) 20px 22px,transparent 22px 24px,rgba(255,190,110,0.06) 24px 26px,rgba(0,0,0,0.12) 26px 28px,rgba(0,0,0,0.08) 28px 30px,rgba(0,0,0,0.12) 30px 34px)"></i><i style="left:96px;top:64px;width:32px;height:32px;background:linear-gradient(180deg,rgba(255,190,110,0.06) 0px 2px,rgba(255,190,110,0.06) 2px 4px,transparent 4px 8px,rgba(0,0,0,0.08) 8px 10px,transparent 10px 11px,rgba(0,0,0,0.12) 11px 13px,rgba(0,0,0,0.08) 13px 15px,rgba(0,0,0,0.12) 15px 17px,rgba(0,0,0,0.08) 17px 19px,rgba(255,190,110,0.06) 19px 20px,rgba(0,0,0,0.08) 20px 21px,rgba(255,190,110,0.06) 21px 24px,rgba(255,190,110,0.06) 24px 28px,rgba(0,0,0,0.08) 28px 29px,rgba(0,0,0,0.12) 29px 33px)"></i><i style="left:128px;top:64px;width:32px;height:16px;background:#A08670"></i><i style="left:128px;top:80px;width:32px;height:8px;background:#9A7E66"></i><i style="left:128px;top:88px;width:32px;height:8px;background:#9C8268"></i><i style="left:128px;top:64px;width:32px;height:32px;background:linear-gradient(90deg,rgba(0,0,0,0.08) 0px 2px,rgba(0,0,0,0.08) 2px 5px,transparent 5px 9px,rgba(0,0,0,0.08) 9px 11px,rgba(0,0,0,0.12) 11px 12px,transparent 12px 14px,transparent 14px 18px,rgba(255,190,110,0.06) 18px 20px,rgba(0,0,0,0.08) 20px 22px,rgba(0,0,0,0.08) 22px 26px,transparent 26px 27px,transparent 27px 29px,rgba(255,190,110,0.06) 29px 31px,rgba(0,0,0,0.12) 31px 34px)"></i><i style="left:128px;top:64px;width:32px;height:32px;background:linear-gradient(180deg,rgba(0,0,0,0.08) 0px 4px,transparent 4px 5px,transparent 5px 8px,transparent 8px 12px,transparent 12px 13px,rgba(255,190,110,0.06) 13px 14px,rgba(0,0,0,0.08) 14px 16px,rgba(255,190,110,0.06) 16px 17px,rgba(255,190,110,0.06) 17px 19px,rgba(0,0,0,0.12) 19px 21px,rgba(0,0,0,0.08) 21px 25px,transparent 25px 29px,rgba(0,0,0,0.08) 29px 31px,rgba(0,0,0,0.12) 31px 35px)"></i><i style="left:160px;top:64px;width:32px;height:24px;background:#9A8A6E"></i><i style="left:160px;top:88px;width:32px;height:8px;background:#A07850"></i><i style="left:160px;top:64px;width:32px;height:32px;background:linear-gradient(90deg,transparent 0px 2px,transparent 2px 3px,rgba(0,0,0,0.12) 3px 5px,transparent 5px 6px,rgba(0,0,0,0.08) 6px 8px,rgba(0,0,0,0.08) 8px 11px,transparent 11px 12px,rgba(0,0,0,0.08) 12px 16px,rgba(255,190,110,0.06) 16px 20px,rgba(255,190,110,0.06) 20px 23px,rgba(0,0,0,0.12) 23px 27px,transparent 27px 29px,transparent 29px 30px,rgba(255,190,110,0.06) 30px 31px,rgba(0,0,0,0.12) 31px 32px)"></i><i style="left:160px;top:64px;width:32px;height:32px;background:linear-gradient(180deg,transparent 0px 2px,transparent 2px 4px,transparent 4px 5px,rgba(255,190,110,0.06) 5px 9px,transparent 9px 11px,transparent 11px 14px,rgba(255,190,110,0.06) 14px 18px,rgba(0,0,0,0.12) 18px 22px,transparent 22px 26px,rgba(0,0,0,0.08) 26px 30px,rgba(0,0,0,0.08) 30px 31px,rgba(0,0,0,0.12) 31px 32px)"></i><i style="left:192px;top:64px;width:32px;height:8px;background:#6A5A46"></i><i style="left:192px;top:72px;width:32px;height:8px;background:#A08A6A"></i><i style="left:192px;top:80px;width:32px;height:8px;background:#9A7A58"></i><i style="left:192px;top:88px;width:32px;height:8px;background:#9A6A40"></i><i style="left:192px;top:64px;width:32px;height:32px;background:linear-gradient(90deg,transparent 0px 4px,rgba(0,0,0,0.12) 4px 7px,transparent 7px 10px,transparent 10px 13px,transparent 13px 15px,transparent 15px 17px,transparent 17px 18px,rgba(0,0,0,0.08) 18px 20px,rgba(0,0,0,0.08) 20px 21px,rgba(0,0,0,0.12) 21px 25px,rgba(0,0,0,0.08) 25px 29px,transparent 29px 31px,rgba(255,190,110,0.06) 31px 32px)"></i><i style="left:192px;top:64px;width:32px;height:32px;background:linear-gradient(180deg,transparent 0px 1px,transparent 1px 3px,transparent 3px 5px,transparent 5px 7px,rgba(0,0,0,0.08) 7px 10px,transparent 10px 14px,rgba(255,190,110,0.06) 14px 17px,rgba(0,0,0,0.12) 17px 20px,transparent 20px 24px,rgba(0,0,0,0.12) 24px 25px,rgba(255,190,110,0.06) 25px 27px,transparent 27px 29px,rgba(255,190,110,0.06) 29px 32px)"></i><i style="left:224px;top:64px;width:32px;height:8px;background:#201810"></i><i style="left:224px;top:72px;width:32px;height:8px;background:#9A8868"></i><i style="left:224px;top:80px;width:32px;height:8px;background:#8A7A40"></i><i style="left:224px;top:88px;width:32px;height:8px;background:#6A5A34"></i><i style="left:224px;top:64px;width:32px;height:32px;background:linear-gradient(90deg,transparent 0px 4px,transparent 4px 8px,transparent 8px 10px,transparent 10px 11px,rgba(255,190,110,0.054) 11px 12px,rgba(0,0,0,0.08) 12px 14px,transparent 14px 16px,transparent 16px 17px,transparent 17px 19px,transparent 19px 20px,rgba(255,190,110,0.054) 20px 21px,transparent 21px 23px,transparent 23px 27px,transparent 27px 30px,transparent 30px 32px)"></i><i style="left:224px;top:64px;width:32px;height:32px;background:linear-gradient(180deg,transparent 0px 2px,transparent 2px 3px,rgba(0,0,0,0.08) 3px 4px,transparent 4px 7px,transparent 7px 9px,rgba(0,0,0,0.08) 9px 11px,rgba(0,0,0,0.08) 11px 13px,rgba(0,0,0,0.08) 13px 16px,rgba(0,0,0,0.08) 16px 17px,rgba(0,0,0,0.08) 17px 19px,rgba(0,0,0,0.08) 19px 20px,rgba(255,190,110,0.054) 20px 22px,rgba(0,0,0,0.12) 22px 26px,rgba(255,190,110,0.054) 26px 28px,rgba(0,0,0,0.12) 28px 29px,rgba(0,0,0,0.12) 29px 30px,transparent 30px 34px)"></i><i style="left:256px;top:64px;width:32px;height:8px;background:#0E0A06"></i><i style="left:256px;top:72px;width:32px;height:8px;background:#3A3424"></i><i style="left:256px;top:80px;width:32px;height:8px;background:#3E3626"></i><i style="left:256px;top:88px;width:32px;height:8px;background:#3A3424"></i><i style="left:256px;top:64px;width:32px;height:32px;background:linear-gradient(90deg,rgba(0,0,0,0.12) 0px 2px,rgba(255,190,110,0.018) 2px 3px,transparent 3px 7px,rgba(255,190,110,0.018) 7px 8px,transparent 8px 10px,transparent 10px 13px,transparent 13px 17px,transparent 17px 19px,rgba(0,0,0,0.08) 19px 20px,transparent 20px 23px,transparent 23px 26px,rgba(255,190,110,0.018) 26px 29px,rgba(255,190,110,0.018) 29px 31px,rgba(255,190,110,0.018) 31px 33px)"></i><i style="left:256px;top:64px;width:32px;height:32px;background:linear-gradient(180deg,rgba(0,0,0,0.08) 0px 2px,transparent 2px 4px,transparent 4px 7px,transparent 7px 8px,rgba(255,190,110,0.018) 8px 11px,rgba(0,0,0,0.08) 11px 12px,transparent 12px 14px,rgba(0,0,0,0.12) 14px 17px,rgba(0,0,0,0.12) 17px 18px,rgba(0,0,0,0.08) 18px 19px,rgba(0,0,0,0.08) 19px 21px,rgba(0,0,0,0.12) 21px 23px,rgba(255,190,110,0.018) 23px 27px,rgba(0,0,0,0.12) 27px 29px,rgba(0,0,0,0.12) 29px 31px,rgba(255,190,110,0.018) 31px 33px)"></i><i style="left:288px;top:64px;width:32px;height:8px;background:#8A5030"></i><i style="left:288px;top:72px;width:32px;height:24px;background:#3A2418"></i><i style="left:288px;top:64px;width:32px;height:32px;background:linear-gradient(90deg,rgba(255,190,110,0.027) 0px 4px,rgba(0,0,0,0.08) 4px 5px,rgba(0,0,0,0.08) 5px 9px,transparent 9px 13px,rgba(255,190,110,0.027) 13px 16px,transparent 16px 18px,rgba(0,0,0,0.12) 18px 21px,rgba(255,190,110,0.027) 21px 23px,transparent 23px 25px,rgba(0,0,0,0.12) 25px 27px,rgba(255,190,110,0.027) 27px 29px,rgba(0,0,0,0.08) 29px 31px,rgba(255,190,110,0.027) 31px 33px)"></i><i style="left:288px;top:64px;width:32px;height:32px;background:linear-gradient(180deg,transparent 0px 2px,rgba(0,0,0,0.08) 2px 4px,rgba(255,190,110,0.027) 4px 8px,transparent 8px 10px,rgba(0,0,0,0.08) 10px 12px,rgba(0,0,0,0.08) 12px 14px,transparent 14px 15px,transparent 15px 16px,transparent 16px 19px,rgba(0,0,0,0.08) 19px 21px,rgba(0,0,0,0.12) 21px 23px,transparent 23px 25px,transparent 25px 26px,transparent 26px 28px,rgba(0,0,0,0.12) 28px 31px,transparent 31px 32px)"></i><i style="left:0px;top:96px;width:32px;height:8px;background:#8A4A30"></i><i style="left:0px;top:104px;width:32px;height:8px;background:#8A5034"></i><i style="left:0px;top:112px;width:32px;height:8px;background:#8A4E32"></i><i style="left:0px;top:120px;width:32px;height:8px;background:#8A4C32"></i><i style="left:0px;top:96px;width:32px;height:32px;background:linear-gradient(90deg,rgba(0,0,0,0.12) 0px 3px,rgba(255,190,110,0.055) 3px 5px,rgba(0,0,0,0.12) 5px 7px,transparent 7px 8px,rgba(255,190,110,0.055) 8px 10px,transparent 10px 13px,rgba(0,0,0,0.12) 13px 15px,rgba(255,190,110,0.055) 15px 19px,transparent 19px 22px,transparent 22px 26px,transparent 26px 28px,rgba(0,0,0,0.12) 28px 31px,rgba(0,0,0,0.08) 31px 33px)"></i><i style="left:0px;top:96px;width:32px;height:32px;background:linear-gradient(180deg,rgba(0,0,0,0.12) 0px 1px,rgba(0,0,0,0.12) 1px 3px,rgba(0,0,0,0.08) 3px 5px,rgba(0,0,0,0.12) 5px 8px,transparent 8px 11px,rgba(0,0,0,0.12) 11px 15px,transparent 15px 19px,transparent 19px 21px,rgba(0,0,0,0.12) 21px 24px,transparent 24px 25px,rgba(255,190,110,0.055) 25px 27px,transparent 27px 29px,rgba(255,190,110,0.055) 29px 31px,transparent 31px 33px)"></i><i style="left:32px;top:96px;width:32px;height:8px;background:#8A4C34"></i><i style="left:32px;top:104px;width:32px;height:16px;background:#8A4E36"></i><i style="left:32px;top:120px;width:32px;height:8px;background:#864A34"></i><i style="left:32px;top:96px;width:32px;height:32px;background:linear-gradient(90deg,rgba(0,0,0,0.12) 0px 4px,transparent 4px 8px,rgba(255,190,110,0.055) 8px 11px,rgba(0,0,0,0.08) 11px 12px,rgba(0,0,0,0.08) 12px 16px,rgba(0,0,0,0.12) 16px 19px,transparent 19px 21px,rgba(255,190,110,0.055) 21px 24px,rgba(255,190,110,0.055) 24px 25px,transparent 25px 27px,rgba(0,0,0,0.08) 27px 29px,rgba(0,0,0,0.12) 29px 32px)"></i><i style="left:32px;top:96px;width:32px;height:32px;background:linear-gradient(180deg,transparent 0px 1px,rgba(0,0,0,0.12) 1px 2px,rgba(0,0,0,0.08) 2px 5px,rgba(0,0,0,0.08) 5px 9px,transparent 9px 10px,rgba(0,0,0,0.12) 10px 12px,transparent 12px 16px,rgba(0,0,0,0.12) 16px 19px,transparent 19px 21px,transparent 21px 23px,rgba(0,0,0,0.12) 23px 25px,transparent 25px 29px,rgba(0,0,0,0.08) 29px 31px,rgba(0,0,0,0.12) 31px 34px)"></i><i style="left:64px;top:96px;width:32px;height:8px;background:#3E3430"></i><i style="left:64px;top:104px;width:32px;height:8px;background:#B09078"></i><i style="left:64px;top:112px;width:32px;height:16px;background:#A07868"></i><i style="left:64px;top:96px;width:32px;height:32px;background:linear-gradient(90deg,rgba(255,190,110,0.06) 0px 2px,rgba(0,0,0,0.12) 2px 4px,transparent 4px 6px,rgba(0,0,0,0.12) 6px 8px,rgba(0,0,0,0.12) 8px 10px,rgba(0,0,0,0.12) 10px 12px,rgba(0,0,0,0.08) 12px 13px,transparent 13px 15px,rgba(0,0,0,0.08) 15px 17px,rgba(0,0,0,0.12) 17px 20px,rgba(255,190,110,0.06) 20px 23px,rgba(0,0,0,0.08) 23px 24px,rgba(0,0,0,0.08) 24px 26px,transparent 26px 29px,rgba(255,190,110,0.06) 29px 30px,transparent 30px 32px)"></i><i style="left:64px;top:96px;width:32px;height:32px;background:linear-gradient(180deg,rgba(0,0,0,0.08) 0px 4px,transparent 4px 8px,transparent 8px 9px,rgba(0,0,0,0.08) 9px 10px,rgba(255,190,110,0.06) 10px 12px,rgba(255,190,110,0.06) 12px 13px,transparent 13px 15px,rgba(0,0,0,0.12) 15px 17px,transparent 17px 19px,rgba(0,0,0,0.12) 19px 21px,transparent 21px 25px,rgba(255,190,110,0.06) 25px 29px,rgba(255,190,110,0.06) 29px 30px,transparent 30px 32px)"></i><i style="left:96px;top:96px;width:32px;height:8px;background:#1E1812"></i><i style="left:96px;top:104px;width:32px;height:16px;background:#A07A66"></i><i style="left:96px;top:120px;width:32px;height:8px;background:#9E7864"></i><i style="left:96px;top:96px;width:32px;height:32px;background:linear-gradient(90deg,transparent 0px 3px,transparent 3px 7px,transparent 7px 10px,transparent 10px 14px,rgba(0,0,0,0.12) 14px 16px,transparent 16px 18px,rgba(0,0,0,0.12) 18px 21px,transparent 21px 25px,rgba(0,0,0,0.12) 25px 28px,rgba(0,0,0,0.12) 28px 30px,rgba(0,0,0,0.12) 30px 32px)"></i><i style="left:96px;top:96px;width:32px;height:32px;background:linear-gradient(180deg,rgba(255,190,110,0.06) 0px 2px,transparent 2px 6px,rgba(0,0,0,0.08) 6px 8px,rgba(255,190,110,0.06) 8px 11px,rgba(0,0,0,0.08) 11px 14px,rgba(0,0,0,0.08) 14px 17px,rgba(0,0,0,0.12) 17px 20px,transparent 20px 21px,transparent 21px 23px,rgba(255,190,110,0.06) 23px 24px,rgba(0,0,0,0.08) 24px 25px,rgba(255,190,110,0.06) 25px 26px,rgba(0,0,0,0.12) 26px 29px,transparent 29px 31px,rgba(0,0,0,0.12) 31px 33px)"></i><i style="left:128px;top:96px;width:32px;height:8px;background:#1A120C"></i><i style="left:128px;top:104px;width:32px;height:16px;background:#5A4028"></i><i style="left:128px;top:120px;width:32px;height:8px;background:#8A7258"></i><i style="left:128px;top:96px;width:32px;height:32px;background:linear-gradient(90deg,rgba(0,0,0,0.08) 0px 2px,rgba(0,0,0,0.08) 2px 3px,rgba(0,0,0,0.12) 3px 5px,rgba(255,190,110,0.038) 5px 9px,rgba(0,0,0,0.08) 9px 11px,rgba(0,0,0,0.08) 11px 14px,rgba(0,0,0,0.08) 14px 17px,transparent 17px 21px,rgba(0,0,0,0.08) 21px 23px,rgba(0,0,0,0.12) 23px 25px,rgba(0,0,0,0.08) 25px 28px,rgba(0,0,0,0.08) 28px 32px)"></i><i style="left:128px;top:96px;width:32px;height:32px;background:linear-gradient(180deg,rgba(0,0,0,0.08) 0px 4px,rgba(0,0,0,0.12) 4px 6px,rgba(0,0,0,0.08) 6px 7px,rgba(0,0,0,0.08) 7px 9px,transparent 9px 11px,transparent 11px 15px,rgba(0,0,0,0.12) 15px 16px,rgba(0,0,0,0.12) 16px 20px,rgba(255,190,110,0.038) 20px 24px,rgba(0,0,0,0.12) 24px 25px,transparent 25px 27px,transparent 27px 28px,rgba(0,0,0,0.12) 28px 30px,transparent 30px 34px)"></i><i style="left:160px;top:96px;width:32px;height:8px;background:#140E0A"></i><i style="left:160px;top:104px;width:32px;height:16px;background:#221A10"></i><i style="left:160px;top:120px;width:32px;height:8px;background:#4A4030"></i><i style="left:160px;top:120px;width:32px;height:3px;background:#8A7A60"></i><i style="left:160px;top:96px;width:32px;height:32px;background:linear-gradient(90deg,rgba(255,190,110,0.013) 0px 4px,rgba(0,0,0,0.12) 4px 8px,transparent 8px 12px,transparent 12px 16px,transparent 16px 18px,transparent 18px 21px,transparent 21px 22px,rgba(0,0,0,0.12) 22px 23px,transparent 23px 24px,transparent 24px 26px,rgba(255,190,110,0.013) 26px 28px,rgba(0,0,0,0.08) 28px 30px,rgba(0,0,0,0.12) 30px 32px)"></i><i style="left:160px;top:96px;width:32px;height:32px;background:linear-gradient(180deg,rgba(0,0,0,0.08) 0px 1px,rgba(0,0,0,0.12) 1px 2px,rgba(255,190,110,0.013) 2px 6px,rgba(0,0,0,0.12) 6px 7px,rgba(255,190,110,0.013) 7px 11px,transparent 11px 12px,rgba(255,190,110,0.013) 12px 15px,rgba(0,0,0,0.12) 15px 18px,transparent 18px 19px,rgba(255,190,110,0.013) 19px 22px,transparent 22px 26px,rgba(0,0,0,0.12) 26px 29px,transparent 29px 33px)"></i><i style="left:192px;top:96px;width:32px;height:24px;background:#1C160E"></i><i style="left:192px;top:120px;width:32px;height:8px;background:#5A4E3A"></i><i style="left:192px;top:120px;width:32px;height:2px;background:#7A6A50"></i><i style="left:192px;top:96px;width:32px;height:32px;background:linear-gradient(90deg,rgba(0,0,0,0.12) 0px 1px,transparent 1px 3px,rgba(0,0,0,0.12) 3px 4px,transparent 4px 5px,transparent 5px 6px,transparent 6px 8px,rgba(0,0,0,0.12) 8px 10px,rgba(0,0,0,0.08) 10px 11px,transparent 11px 15px,transparent 15px 18px,rgba(0,0,0,0.08) 18px 19px,transparent 19px 21px,rgba(255,190,110,0.015) 21px 23px,rgba(0,0,0,0.12) 23px 26px,transparent 26px 28px,transparent 28px 29px,transparent 29px 30px,transparent 30px 34px)"></i><i style="left:192px;top:96px;width:32px;height:32px;background:linear-gradient(180deg,rgba(0,0,0,0.08) 0px 3px,rgba(255,190,110,0.015) 3px 5px,rgba(0,0,0,0.12) 5px 7px,transparent 7px 11px,rgba(0,0,0,0.08) 11px 13px,rgba(0,0,0,0.12) 13px 17px,transparent 17px 20px,transparent 20px 22px,transparent 22px 24px,rgba(0,0,0,0.12) 24px 27px,rgba(0,0,0,0.12) 27px 30px,rgba(255,190,110,0.015) 30px 32px)"></i><i style="left:224px;top:96px;width:32px;height:8px;background:#2A2418"></i><i style="left:224px;top:104px;width:32px;height:8px;background:#2E2818"></i><i style="left:224px;top:112px;width:32px;height:8px;background:#2A2418"></i><i style="left:224px;top:120px;width:32px;height:8px;background:#201A10"></i><i style="left:224px;top:96px;width:32px;height:32px;background:linear-gradient(90deg,rgba(0,0,0,0.08) 0px 2px,transparent 2px 4px,rgba(255,190,110,0.013) 4px 8px,rgba(255,190,110,0.013) 8px 10px,transparent 10px 11px,rgba(0,0,0,0.08) 11px 15px,rgba(0,0,0,0.12) 15px 19px,rgba(0,0,0,0.12) 19px 21px,rgba(0,0,0,0.12) 21px 24px,transparent 24px 28px,rgba(0,0,0,0.08) 28px 31px,rgba(0,0,0,0.08) 31px 32px)"></i><i style="left:224px;top:96px;width:32px;height:32px;background:linear-gradient(180deg,rgba(0,0,0,0.08) 0px 2px,transparent 2px 5px,transparent 5px 9px,transparent 9px 11px,transparent 11px 15px,rgba(255,190,110,0.013) 15px 17px,rgba(0,0,0,0.08) 17px 20px,transparent 20px 24px,rgba(255,190,110,0.013) 24px 28px,rgba(0,0,0,0.12) 28px 31px,transparent 31px 33px)"></i><i style="left:256px;top:96px;width:32px;height:8px;background:#A88C40"></i><i style="left:256px;top:104px;width:32px;height:8px;background:#8A7040"></i><i style="left:256px;top:112px;width:32px;height:16px;background:#4A4230"></i><i style="left:256px;top:96px;width:32px;height:32px;background:linear-gradient(90deg,rgba(255,190,110,0.055) 0px 2px,rgba(0,0,0,0.12) 2px 3px,transparent 3px 6px,rgba(255,190,110,0.055) 6px 8px,rgba(0,0,0,0.12) 8px 9px,rgba(255,190,110,0.055) 9px 12px,rgba(255,190,110,0.055) 12px 13px,transparent 13px 15px,rgba(0,0,0,0.12) 15px 17px,rgba(255,190,110,0.055) 17px 21px,rgba(255,190,110,0.055) 21px 23px,rgba(0,0,0,0.12) 23px 25px,rgba(255,190,110,0.055) 25px 29px,transparent 29px 31px,transparent 31px 33px)"></i><i style="left:256px;top:96px;width:32px;height:32px;background:linear-gradient(180deg,transparent 0px 1px,rgba(0,0,0,0.08) 1px 3px,rgba(255,190,110,0.055) 3px 7px,rgba(0,0,0,0.12) 7px 9px,transparent 9px 13px,transparent 13px 15px,rgba(0,0,0,0.08) 15px 18px,rgba(0,0,0,0.08) 18px 19px,transparent 19px 22px,rgba(0,0,0,0.08) 22px 24px,transparent 24px 28px,rgba(0,0,0,0.08) 28px 30px,rgba(255,190,110,0.055) 30px 34px)"></i><i style="left:288px;top:96px;width:32px;height:32px;background:#8A4A30"></i><i style="left:288px;top:96px;width:32px;height:32px;background:linear-gradient(90deg,transparent 0px 1px,transparent 1px 2px,rgba(0,0,0,0.12) 2px 6px,rgba(255,190,110,0.054) 6px 10px,rgba(0,0,0,0.08) 10px 12px,rgba(0,0,0,0.12) 12px 14px,rgba(0,0,0,0.12) 14px 15px,rgba(255,190,110,0.054) 15px 19px,rgba(0,0,0,0.08) 19px 21px,rgba(0,0,0,0.08) 21px 22px,transparent 22px 24px,transparent 24px 27px,transparent 27px 28px,rgba(255,190,110,0.054) 28px 29px,rgba(0,0,0,0.12) 29px 31px,transparent 31px 34px)"></i><i style="left:288px;top:96px;width:32px;height:32px;background:linear-gradient(180deg,rgba(0,0,0,0.12) 0px 4px,transparent 4px 5px,rgba(0,0,0,0.08) 5px 7px,transparent 7px 11px,rgba(255,190,110,0.054) 11px 12px,transparent 12px 15px,transparent 15px 18px,transparent 18px 20px,transparent 20px 22px,rgba(0,0,0,0.08) 22px 23px,transparent 23px 25px,transparent 25px 29px,rgba(0,0,0,0.08) 29px 30px,rgba(0,0,0,0.12) 30px 34px)"></i><i style="left:0px;top:128px;width:32px;height:8px;background:#8A6A5E"></i><i style="left:0px;top:136px;width:32px;height:16px;background:#8A6454"></i><i style="left:0px;top:152px;width:32px;height:8px;background:#8A4A34"></i><i style="left:0px;top:152px;width:32px;height:4px;background:#963C24"></i><i style="left:0px;top:156px;width:32px;height:4px;background:#7A5A4C"></i><i style="left:0px;top:128px;width:32px;height:32px;background:linear-gradient(90deg,transparent 0px 1px,rgba(0,0,0,0.08) 1px 3px,transparent 3px 4px,rgba(255,190,110,0.06) 4px 6px,rgba(0,0,0,0.12) 6px 10px,rgba(0,0,0,0.12) 10px 11px,rgba(0,0,0,0.08) 11px 13px,rgba(0,0,0,0.12) 13px 15px,rgba(0,0,0,0.08) 15px 16px,rgba(0,0,0,0.12) 16px 19px,rgba(0,0,0,0.12) 19px 21px,transparent 21px 23px,rgba(0,0,0,0.12) 23px 24px,transparent 24px 26px,transparent 26px 28px,rgba(255,190,110,0.06) 28px 29px,transparent 29px 31px,transparent 31px 34px)"></i><i style="left:0px;top:128px;width:32px;height:32px;background:linear-gradient(180deg,transparent 0px 3px,rgba(0,0,0,0.12) 3px 4px,rgba(0,0,0,0.08) 4px 6px,rgba(0,0,0,0.12) 6px 8px,rgba(0,0,0,0.08) 8px 9px,rgba(0,0,0,0.08) 9px 11px,transparent 11px 13px,rgba(0,0,0,0.12) 13px 15px,transparent 15px 19px,transparent 19px 22px,rgba(0,0,0,0.12) 22px 24px,transparent 24px 27px,transparent 27px 29px,rgba(255,190,110,0.06) 29px 31px,rgba(0,0,0,0.08) 31px 33px)"></i><i style="left:32px;top:128px;width:32px;height:8px;background:#7A5A4A"></i><i style="left:32px;top:136px;width:32px;height:8px;background:#5A4038"></i><i style="left:32px;top:144px;width:32px;height:8px;background:#5E4238"></i><i style="left:32px;top:152px;width:32px;height:8px;background:#7A4A38"></i><i style="left:32px;top:128px;width:32px;height:32px;background:linear-gradient(90deg,rgba(0,0,0,0.08) 0px 2px,transparent 2px 5px,rgba(0,0,0,0.12) 5px 7px,transparent 7px 10px,rgba(255,190,110,0.049) 10px 12px,transparent 12px 13px,rgba(0,0,0,0.12) 13px 17px,transparent 17px 19px,transparent 19px 21px,rgba(0,0,0,0.12) 21px 23px,transparent 23px 25px,transparent 25px 27px,rgba(0,0,0,0.08) 27px 30px,transparent 30px 33px)"></i><i style="left:32px;top:128px;width:32px;height:32px;background:linear-gradient(180deg,rgba(0,0,0,0.08) 0px 1px,transparent 1px 3px,rgba(255,190,110,0.049) 3px 6px,rgba(255,190,110,0.049) 6px 8px,rgba(0,0,0,0.12) 8px 10px,rgba(255,190,110,0.049) 10px 11px,transparent 11px 13px,rgba(0,0,0,0.12) 13px 15px,rgba(0,0,0,0.12) 15px 16px,rgba(0,0,0,0.08) 16px 18px,transparent 18px 22px,transparent 22px 24px,transparent 24px 28px,transparent 28px 30px,transparent 30px 34px)"></i><i style="left:64px;top:128px;width:32px;height:8px;background:#3A2820"></i><i style="left:64px;top:136px;width:32px;height:8px;background:#3E2A20"></i><i style="left:64px;top:144px;width:32px;height:8px;background:#3A2820"></i><i style="left:64px;top:152px;width:32px;height:8px;background:#4A3428"></i><i style="left:64px;top:128px;width:32px;height:32px;background:linear-gradient(90deg,rgba(255,190,110,0.024) 0px 1px,rgba(0,0,0,0.08) 1px 4px,transparent 4px 6px,rgba(255,190,110,0.024) 6px 8px,rgba(255,190,110,0.024) 8px 10px,transparent 10px 12px,transparent 12px 13px,rgba(0,0,0,0.12) 13px 17px,rgba(255,190,110,0.024) 17px 18px,rgba(0,0,0,0.08) 18px 20px,rgba(0,0,0,0.12) 20px 22px,transparent 22px 23px,rgba(0,0,0,0.12) 23px 26px,rgba(0,0,0,0.08) 26px 28px,transparent 28px 30px,rgba(0,0,0,0.08) 30px 34px)"></i><i style="left:64px;top:128px;width:32px;height:32px;background:linear-gradient(180deg,transparent 0px 1px,rgba(255,190,110,0.024) 1px 3px,transparent 3px 7px,rgba(255,190,110,0.024) 7px 9px,rgba(255,190,110,0.024) 9px 12px,transparent 12px 13px,transparent 13px 15px,rgba(0,0,0,0.12) 15px 17px,transparent 17px 21px,transparent 21px 23px,rgba(0,0,0,0.12) 23px 26px,transparent 26px 30px,rgba(255,190,110,0.024) 30px 34px)"></i><i style="left:96px;top:128px;width:32px;height:8px;background:#2A1C14"></i><i style="left:96px;top:136px;width:32px;height:8px;background:#241810"></i><i style="left:96px;top:144px;width:32px;height:8px;background:#201610"></i><i style="left:96px;top:152px;width:32px;height:8px;background:#2A1C14"></i><i style="left:96px;top:128px;width:32px;height:32px;background:linear-gradient(90deg,transparent 0px 2px,transparent 2px 4px,rgba(255,190,110,0.009) 4px 6px,transparent 6px 8px,rgba(0,0,0,0.08) 8px 9px,rgba(255,190,110,0.009) 9px 11px,transparent 11px 12px,transparent 12px 13px,transparent 13px 15px,rgba(255,190,110,0.009) 15px 19px,rgba(255,190,110,0.009) 19px 22px,rgba(0,0,0,0.12) 22px 24px,rgba(0,0,0,0.08) 24px 25px,transparent 25px 26px,rgba(0,0,0,0.08) 26px 27px,rgba(0,0,0,0.12) 27px 28px,rgba(255,190,110,0.009) 28px 31px,rgba(0,0,0,0.08) 31px 35px)"></i><i style="left:96px;top:128px;width:32px;height:32px;background:linear-gradient(180deg,transparent 0px 1px,rgba(0,0,0,0.12) 1px 2px,rgba(255,190,110,0.009) 2px 4px,transparent 4px 8px,transparent 8px 10px,rgba(0,0,0,0.12) 10px 14px,transparent 14px 17px,rgba(0,0,0,0.12) 17px 18px,rgba(255,190,110,0.009) 18px 21px,rgba(255,190,110,0.009) 21px 25px,rgba(0,0,0,0.12) 25px 26px,rgba(0,0,0,0.08) 26px 27px,rgba(0,0,0,0.12) 27px 29px,rgba(0,0,0,0.08) 29px 31px,rgba(255,190,110,0.009) 31px 34px)"></i><i style="left:128px;top:128px;width:32px;height:32px;background:#120C08"></i><i style="left:128px;top:128px;width:32px;height:32px;background:linear-gradient(90deg,rgba(0,0,0,0.12) 0px 2px,transparent 2px 6px,rgba(255,190,110,0.009) 6px 8px,rgba(0,0,0,0.08) 8px 10px,rgba(0,0,0,0.12) 10px 12px,rgba(0,0,0,0.08) 12px 13px,rgba(255,190,110,0.009) 13px 14px,transparent 14px 16px,rgba(0,0,0,0.12) 16px 18px,rgba(255,190,110,0.009) 18px 20px,transparent 20px 21px,rgba(0,0,0,0.12) 21px 23px,rgba(0,0,0,0.12) 23px 26px,transparent 26px 27px,rgba(255,190,110,0.009) 27px 28px,rgba(255,190,110,0.009) 28px 30px,rgba(255,190,110,0.009) 30px 32px)"></i><i style="left:128px;top:128px;width:32px;height:32px;background:linear-gradient(180deg,rgba(255,190,110,0.009) 0px 1px,rgba(0,0,0,0.08) 1px 2px,rgba(255,190,110,0.009) 2px 3px,rgba(0,0,0,0.12) 3px 4px,transparent 4px 6px,transparent 6px 8px,rgba(0,0,0,0.08) 8px 10px,transparent 10px 12px,rgba(255,190,110,0.009) 12px 13px,rgba(0,0,0,0.08) 13px 17px,rgba(0,0,0,0.12) 17px 18px,rgba(255,190,110,0.009) 18px 22px,rgba(0,0,0,0.12) 22px 24px,rgba(255,190,110,0.009) 24px 25px,rgba(0,0,0,0.08) 25px 27px,rgba(255,190,110,0.009) 27px 30px,rgba(0,0,0,0.08) 30px 32px)"></i><i style="left:160px;top:128px;width:32px;height:8px;background:#2A2414"></i><i style="left:160px;top:136px;width:32px;height:8px;background:#1E1810"></i><i style="left:160px;top:144px;width:32px;height:16px;background:#1C160E"></i><i style="left:160px;top:128px;width:32px;height:32px;background:linear-gradient(90deg,transparent 0px 2px,rgba(0,0,0,0.08) 2px 6px,rgba(255,190,110,0.009) 6px 9px,transparent 9px 13px,transparent 13px 16px,rgba(0,0,0,0.08) 16px 20px,rgba(255,190,110,0.009) 20px 23px,rgba(255,190,110,0.009) 23px 25px,rgba(0,0,0,0.12) 25px 28px,transparent 28px 30px,rgba(0,0,0,0.08) 30px 32px)"></i><i style="left:160px;top:128px;width:32px;height:32px;background:linear-gradient(180deg,transparent 0px 2px,rgba(255,190,110,0.009) 2px 6px,rgba(255,190,110,0.009) 6px 9px,transparent 9px 12px,transparent 12px 14px,rgba(0,0,0,0.08) 14px 16px,rgba(0,0,0,0.08) 16px 20px,rgba(0,0,0,0.08) 20px 23px,transparent 23px 25px,transparent 25px 27px,transparent 27px 28px,transparent 28px 32px)"></i><i style="left:192px;top:128px;width:32px;height:16px;background:#6A5430"></i><i style="left:192px;top:144px;width:32px;height:8px;background:#3A3018"></i><i style="left:192px;top:152px;width:32px;height:8px;background:#2A2216"></i><i style="left:192px;top:128px;width:32px;height:32px;background:linear-gradient(90deg,rgba(0,0,0,0.08) 0px 4px,transparent 4px 7px,rgba(0,0,0,0.12) 7px 11px,rgba(0,0,0,0.08) 11px 14px,rgba(255,190,110,0.033) 14px 15px,transparent 15px 17px,rgba(0,0,0,0.08) 17px 20px,transparent 20px 22px,rgba(255,190,110,0.033) 22px 24px,rgba(0,0,0,0.08) 24px 28px,transparent 28px 32px)"></i><i style="left:192px;top:128px;width:32px;height:32px;background:linear-gradient(180deg,rgba(0,0,0,0.08) 0px 3px,rgba(0,0,0,0.12) 3px 5px,transparent 5px 6px,rgba(255,190,110,0.033) 6px 9px,transparent 9px 13px,rgba(0,0,0,0.12) 13px 16px,transparent 16px 20px,rgba(0,0,0,0.08) 20px 23px,rgba(255,190,110,0.033) 23px 27px,rgba(0,0,0,0.12) 27px 28px,rgba(0,0,0,0.12) 28px 31px,rgba(0,0,0,0.08) 31px 33px)"></i><i style="left:224px;top:128px;width:32px;height:16px;background:#8A7A50"></i><i style="left:224px;top:144px;width:32px;height:8px;background:#7A6A38"></i><i style="left:224px;top:152px;width:32px;height:8px;background:#4A4028"></i><i style="left:224px;top:128px;width:32px;height:32px;background:linear-gradient(90deg,rgba(0,0,0,0.08) 0px 2px,rgba(255,190,110,0.06) 2px 5px,rgba(255,190,110,0.06) 5px 9px,rgba(0,0,0,0.08) 9px 12px,rgba(0,0,0,0.12) 12px 13px,rgba(0,0,0,0.12) 13px 16px,transparent 16px 18px,rgba(0,0,0,0.08) 18px 22px,rgba(0,0,0,0.12) 22px 24px,rgba(0,0,0,0.12) 24px 28px,transparent 28px 32px)"></i><i style="left:224px;top:128px;width:32px;height:32px;background:linear-gradient(180deg,rgba(0,0,0,0.08) 0px 1px,rgba(255,190,110,0.06) 1px 3px,rgba(0,0,0,0.08) 3px 5px,rgba(0,0,0,0.12) 5px 7px,transparent 7px 8px,rgba(0,0,0,0.08) 8px 9px,rgba(0,0,0,0.12) 9px 13px,rgba(255,190,110,0.06) 13px 15px,rgba(255,190,110,0.06) 15px 17px,rgba(0,0,0,0.12) 17px 21px,rgba(255,190,110,0.06) 21px 25px,rgba(0,0,0,0.12) 25px 28px,rgba(0,0,0,0.08) 28px 31px,rgba(255,190,110,0.06) 31px 32px)"></i><i style="left:256px;top:128px;width:32px;height:8px;background:#A09A70"></i><i style="left:256px;top:136px;width:32px;height:16px;background:#9A9062"></i><i style="left:256px;top:152px;width:32px;height:8px;background:#8A7A48"></i><i style="left:256px;top:128px;width:32px;height:32px;background:linear-gradient(90deg,rgba(0,0,0,0.12) 0px 2px,transparent 2px 3px,transparent 3px 7px,rgba(0,0,0,0.12) 7px 8px,rgba(255,190,110,0.06) 8px 10px,rgba(255,190,110,0.06) 10px 13px,transparent 13px 17px,rgba(0,0,0,0.12) 17px 19px,rgba(0,0,0,0.12) 19px 22px,rgba(255,190,110,0.06) 22px 25px,rgba(0,0,0,0.08) 25px 29px,transparent 29px 33px)"></i><i style="left:256px;top:128px;width:32px;height:32px;background:linear-gradient(180deg,rgba(0,0,0,0.08) 0px 2px,rgba(0,0,0,0.08) 2px 4px,rgba(0,0,0,0.08) 4px 5px,transparent 5px 9px,rgba(0,0,0,0.08) 9px 10px,rgba(255,190,110,0.06) 10px 12px,transparent 12px 15px,rgba(0,0,0,0.08) 15px 19px,transparent 19px 23px,transparent 23px 27px,transparent 27px 30px,rgba(255,190,110,0.06) 30px 31px,transparent 31px 35px)"></i><i style="left:288px;top:128px;width:32px;height:24px;background:#8A6A60"></i><i style="left:288px;top:152px;width:32px;height:8px;background:#8A3A28"></i><i style="left:288px;top:128px;width:32px;height:32px;background:linear-gradient(90deg,rgba(255,190,110,0.06) 0px 2px,rgba(0,0,0,0.12) 2px 3px,transparent 3px 4px,rgba(255,190,110,0.06) 4px 6px,rgba(0,0,0,0.08) 6px 7px,transparent 7px 10px,transparent 10px 14px,transparent 14px 15px,rgba(0,0,0,0.12) 15px 17px,rgba(255,190,110,0.06) 17px 21px,rgba(255,190,110,0.06) 21px 23px,transparent 23px 27px,transparent 27px 31px,rgba(255,190,110,0.06) 31px 34px)"></i><i style="left:288px;top:128px;width:32px;height:32px;background:linear-gradient(180deg,transparent 0px 1px,rgba(255,190,110,0.06) 1px 3px,transparent 3px 7px,transparent 7px 8px,transparent 8px 9px,rgba(0,0,0,0.12) 9px 13px,rgba(255,190,110,0.06) 13px 16px,transparent 16px 19px,rgba(255,190,110,0.06) 19px 20px,transparent 20px 22px,rgba(0,0,0,0.08) 22px 24px,transparent 24px 26px,rgba(0,0,0,0.08) 26px 27px,rgba(255,190,110,0.06) 27px 28px,rgba(0,0,0,0.08) 28px 29px,rgba(0,0,0,0.12) 29px 31px,rgba(0,0,0,0.12) 31px 35px)"></i><i style="left:0px;top:160px;width:32px;height:8px;background:#A87A60"></i><i style="left:0px;top:168px;width:32px;height:8px;background:#A07060"></i><i style="left:0px;top:176px;width:32px;height:8px;background:#9A6E5A"></i><i style="left:0px;top:184px;width:32px;height:8px;background:#8A6A5A"></i><i style="left:0px;top:160px;width:32px;height:32px;background:linear-gradient(90deg,transparent 0px 1px,rgba(0,0,0,0.12) 1px 3px,transparent 3px 7px,transparent 7px 10px,transparent 10px 14px,transparent 14px 16px,transparent 16px 17px,transparent 17px 21px,transparent 21px 23px,rgba(0,0,0,0.08) 23px 26px,rgba(255,190,110,0.06) 26px 29px,rgba(0,0,0,0.12) 29px 31px,transparent 31px 32px)"></i><i style="left:0px;top:160px;width:32px;height:32px;background:linear-gradient(180deg,rgba(255,190,110,0.06) 0px 3px,rgba(0,0,0,0.12) 3px 5px,rgba(0,0,0,0.12) 5px 7px,transparent 7px 10px,transparent 10px 12px,transparent 12px 14px,rgba(0,0,0,0.12) 14px 16px,transparent 16px 18px,rgba(0,0,0,0.12) 18px 20px,rgba(0,0,0,0.08) 20px 24px,rgba(0,0,0,0.08) 24px 25px,rgba(0,0,0,0.12) 25px 29px,rgba(0,0,0,0.12) 29px 31px,transparent 31px 32px)"></i><i style="left:32px;top:160px;width:32px;height:8px;background:#5A4038"></i><i style="left:32px;top:168px;width:32px;height:16px;background:#A07C64"></i><i style="left:32px;top:184px;width:32px;height:8px;background:#8A6A58"></i><i style="left:32px;top:160px;width:32px;height:32px;background:linear-gradient(90deg,rgba(0,0,0,0.08) 0px 3px,transparent 3px 7px,transparent 7px 10px,rgba(0,0,0,0.08) 10px 13px,transparent 13px 15px,transparent 15px 18px,transparent 18px 20px,transparent 20px 22px,transparent 22px 24px,transparent 24px 25px,rgba(255,190,110,0.06) 25px 27px,rgba(255,190,110,0.06) 27px 29px,rgba(0,0,0,0.12) 29px 32px)"></i><i style="left:32px;top:160px;width:32px;height:32px;background:linear-gradient(180deg,transparent 0px 2px,rgba(0,0,0,0.08) 2px 4px,rgba(0,0,0,0.12) 4px 6px,rgba(255,190,110,0.06) 6px 9px,rgba(0,0,0,0.08) 9px 11px,rgba(255,190,110,0.06) 11px 14px,transparent 14px 16px,transparent 16px 19px,rgba(255,190,110,0.06) 19px 21px,rgba(255,190,110,0.06) 21px 24px,rgba(255,190,110,0.06) 24px 26px,rgba(0,0,0,0.12) 26px 28px,rgba(255,190,110,0.06) 28px 32px)"></i><i style="left:64px;top:160px;width:32px;height:8px;background:#3A302C"></i><i style="left:64px;top:168px;width:32px;height:8px;background:#A07C64"></i><i style="left:64px;top:176px;width:32px;height:8px;background:#906048"></i><i style="left:64px;top:184px;width:32px;height:8px;background:#6A4C3C"></i><i style="left:64px;top:160px;width:32px;height:32px;background:linear-gradient(90deg,transparent 0px 2px,rgba(255,190,110,0.057) 2px 3px,rgba(255,190,110,0.057) 3px 4px,rgba(0,0,0,0.12) 4px 6px,rgba(255,190,110,0.057) 6px 7px,rgba(0,0,0,0.08) 7px 9px,rgba(0,0,0,0.12) 9px 10px,transparent 10px 11px,rgba(0,0,0,0.08) 11px 13px,transparent 13px 15px,rgba(255,190,110,0.057) 15px 16px,rgba(255,190,110,0.057) 16px 18px,transparent 18px 20px,rgba(0,0,0,0.08) 20px 21px,transparent 21px 22px,transparent 22px 24px,rgba(0,0,0,0.08) 24px 27px,rgba(0,0,0,0.12) 27px 29px,transparent 29px 32px)"></i><i style="left:64px;top:160px;width:32px;height:32px;background:linear-gradient(180deg,transparent 0px 2px,rgba(0,0,0,0.08) 2px 3px,rgba(0,0,0,0.12) 3px 5px,rgba(0,0,0,0.12) 5px 6px,rgba(0,0,0,0.12) 6px 8px,transparent 8px 10px,rgba(0,0,0,0.08) 10px 12px,rgba(0,0,0,0.08) 12px 13px,transparent 13px 17px,rgba(0,0,0,0.12) 17px 18px,rgba(255,190,110,0.057) 18px 19px,rgba(0,0,0,0.12) 19px 21px,rgba(0,0,0,0.08) 21px 23px,rgba(0,0,0,0.12) 23px 25px,rgba(255,190,110,0.057) 25px 26px,transparent 26px 28px,transparent 28px 32px)"></i><i style="left:96px;top:160px;width:32px;height:8px;background:#3A2A20"></i><i style="left:96px;top:168px;width:32px;height:8px;background:#5A4032"></i><i style="left:96px;top:176px;width:32px;height:8px;background:#4A3428"></i><i style="left:96px;top:184px;width:32px;height:8px;background:#3A2A20"></i><i style="left:96px;top:160px;width:32px;height:32px;background:linear-gradient(90deg,rgba(0,0,0,0.12) 0px 4px,rgba(0,0,0,0.08) 4px 8px,rgba(255,190,110,0.028) 8px 11px,transparent 11px 13px,rgba(0,0,0,0.08) 13px 14px,rgba(255,190,110,0.028) 14px 15px,transparent 15px 19px,transparent 19px 21px,rgba(0,0,0,0.08) 21px 22px,rgba(0,0,0,0.08) 22px 24px,rgba(0,0,0,0.12) 24px 25px,rgba(255,190,110,0.028) 25px 28px,rgba(0,0,0,0.08) 28px 30px,transparent 30px 34px)"></i><i style="left:96px;top:160px;width:32px;height:32px;background:linear-gradient(180deg,rgba(0,0,0,0.12) 0px 2px,rgba(0,0,0,0.08) 2px 5px,rgba(0,0,0,0.12) 5px 9px,transparent 9px 13px,rgba(0,0,0,0.12) 13px 15px,transparent 15px 19px,transparent 19px 22px,rgba(255,190,110,0.028) 22px 23px,transparent 23px 25px,transparent 25px 29px,rgba(255,190,110,0.028) 29px 31px,transparent 31px 33px)"></i><i style="left:128px;top:160px;width:32px;height:32px;background:#140E0A"></i><i style="left:128px;top:160px;width:32px;height:32px;background:linear-gradient(90deg,transparent 0px 1px,rgba(0,0,0,0.08) 1px 3px,transparent 3px 6px,rgba(0,0,0,0.08) 6px 8px,transparent 8px 10px,rgba(0,0,0,0.12) 10px 13px,transparent 13px 15px,rgba(255,190,110,0.009) 15px 16px,transparent 16px 19px,rgba(0,0,0,0.08) 19px 21px,transparent 21px 23px,rgba(255,190,110,0.009) 23px 27px,rgba(0,0,0,0.08) 27px 29px,rgba(255,190,110,0.009) 29px 30px,transparent 30px 33px)"></i><i style="left:128px;top:160px;width:32px;height:32px;background:linear-gradient(180deg,rgba(255,190,110,0.009) 0px 2px,rgba(0,0,0,0.12) 2px 5px,transparent 5px 7px,transparent 7px 9px,rgba(0,0,0,0.12) 9px 11px,transparent 11px 13px,rgba(0,0,0,0.08) 13px 14px,transparent 14px 16px,rgba(0,0,0,0.08) 16px 17px,transparent 17px 20px,rgba(0,0,0,0.08) 20px 22px,rgba(0,0,0,0.12) 22px 25px,rgba(0,0,0,0.08) 25px 29px,transparent 29px 31px,transparent 31px 35px)"></i><i style="left:160px;top:160px;width:32px;height:8px;background:#8A7A40"></i><i style="left:160px;top:168px;width:32px;height:8px;background:#6A5C36"></i><i style="left:160px;top:176px;width:32px;height:8px;background:#5A4E30"></i><i style="left:160px;top:184px;width:32px;height:8px;background:#4A4028"></i><i style="left:160px;top:160px;width:32px;height:32px;background:linear-gradient(90deg,transparent 0px 1px,rgba(0,0,0,0.12) 1px 4px,rgba(0,0,0,0.08) 4px 5px,rgba(0,0,0,0.08) 5px 9px,rgba(0,0,0,0.12) 9px 10px,rgba(0,0,0,0.12) 10px 13px,rgba(255,190,110,0.049) 13px 15px,transparent 15px 17px,transparent 17px 19px,rgba(255,190,110,0.049) 19px 21px,transparent 21px 23px,transparent 23px 24px,transparent 24px 25px,transparent 25px 28px,rgba(0,0,0,0.08) 28px 30px,rgba(255,190,110,0.049) 30px 32px)"></i><i style="left:160px;top:160px;width:32px;height:32px;background:linear-gradient(180deg,transparent 0px 2px,rgba(255,190,110,0.049) 2px 4px,rgba(0,0,0,0.12) 4px 6px,rgba(0,0,0,0.08) 6px 8px,transparent 8px 10px,transparent 10px 12px,rgba(0,0,0,0.08) 12px 16px,transparent 16px 18px,transparent 18px 19px,rgba(255,190,110,0.049) 19px 20px,transparent 20px 23px,rgba(0,0,0,0.12) 23px 25px,rgba(0,0,0,0.12) 25px 28px,rgba(0,0,0,0.08) 28px 30px,rgba(255,190,110,0.049) 30px 34px)"></i><i style="left:192px;top:160px;width:32px;height:8px;background:#B08850"></i><i style="left:192px;top:168px;width:32px;height:8px;background:#A8884E"></i><i style="left:192px;top:176px;width:32px;height:16px;background:#7A6A40"></i><i style="left:192px;top:168px;width:32px;height:4px;background:#C09A40"></i><i style="left:192px;top:160px;width:32px;height:32px;background:linear-gradient(90deg,transparent 0px 1px,transparent 1px 3px,rgba(0,0,0,0.12) 3px 5px,transparent 5px 8px,rgba(0,0,0,0.12) 8px 9px,transparent 9px 12px,rgba(0,0,0,0.08) 12px 14px,transparent 14px 15px,rgba(255,190,110,0.06) 15px 19px,transparent 19px 22px,transparent 22px 24px,rgba(255,190,110,0.06) 24px 25px,rgba(0,0,0,0.08) 25px 28px,rgba(0,0,0,0.12) 28px 29px,transparent 29px 30px,rgba(0,0,0,0.12) 30px 32px)"></i><i style="left:192px;top:160px;width:32px;height:32px;background:linear-gradient(180deg,transparent 0px 2px,rgba(255,190,110,0.06) 2px 5px,rgba(255,190,110,0.06) 5px 7px,rgba(0,0,0,0.12) 7px 9px,rgba(255,190,110,0.06) 9px 10px,rgba(255,190,110,0.06) 10px 12px,rgba(0,0,0,0.12) 12px 15px,transparent 15px 19px,rgba(255,190,110,0.06) 19px 22px,transparent 22px 26px,rgba(0,0,0,0.08) 26px 27px,rgba(0,0,0,0.08) 27px 31px,rgba(255,190,110,0.06) 31px 35px)"></i><i style="left:224px;top:160px;width:32px;height:8px;background:#A88A58"></i><i style="left:224px;top:168px;width:32px;height:8px;background:#B09048"></i><i style="left:224px;top:176px;width:32px;height:16px;background:#A08A58"></i><i style="left:224px;top:170px;width:32px;height:4px;background:#C0A040"></i><i style="left:224px;top:160px;width:32px;height:32px;background:linear-gradient(90deg,rgba(0,0,0,0.08) 0px 3px,transparent 3px 6px,rgba(0,0,0,0.08) 6px 8px,transparent 8px 12px,transparent 12px 14px,transparent 14px 17px,rgba(255,190,110,0.06) 17px 19px,rgba(255,190,110,0.06) 19px 21px,rgba(0,0,0,0.12) 21px 25px,rgba(255,190,110,0.06) 25px 27px,rgba(255,190,110,0.06) 27px 29px,rgba(0,0,0,0.12) 29px 32px)"></i><i style="left:224px;top:160px;width:32px;height:32px;background:linear-gradient(180deg,transparent 0px 2px,transparent 2px 4px,rgba(255,190,110,0.06) 4px 6px,transparent 6px 7px,transparent 7px 9px,rgba(255,190,110,0.06) 9px 11px,rgba(0,0,0,0.12) 11px 13px,rgba(255,190,110,0.06) 13px 15px,transparent 15px 18px,rgba(255,190,110,0.06) 18px 22px,rgba(255,190,110,0.06) 22px 23px,rgba(255,190,110,0.06) 23px 27px,rgba(0,0,0,0.12) 27px 28px,rgba(0,0,0,0.12) 28px 29px,rgba(255,190,110,0.06) 29px 31px,rgba(255,190,110,0.06) 31px 35px)"></i><i style="left:256px;top:160px;width:32px;height:8px;background:#A8905A"></i><i style="left:256px;top:168px;width:32px;height:16px;background:#A89058"></i><i style="left:256px;top:184px;width:32px;height:8px;background:#9A8A60"></i><i style="left:256px;top:160px;width:32px;height:32px;background:linear-gradient(90deg,rgba(255,190,110,0.06) 0px 1px,rgba(0,0,0,0.12) 1px 2px,rgba(255,190,110,0.06) 2px 5px,transparent 5px 7px,rgba(0,0,0,0.12) 7px 11px,transparent 11px 12px,rgba(255,190,110,0.06) 12px 14px,rgba(0,0,0,0.12) 14px 15px,transparent 15px 17px,transparent 17px 19px,rgba(255,190,110,0.06) 19px 20px,rgba(0,0,0,0.12) 20px 22px,transparent 22px 24px,rgba(0,0,0,0.12) 24px 26px,rgba(255,190,110,0.06) 26px 27px,rgba(255,190,110,0.06) 27px 29px,rgba(0,0,0,0.08) 29px 30px,rgba(0,0,0,0.08) 30px 32px)"></i><i style="left:256px;top:160px;width:32px;height:32px;background:linear-gradient(180deg,transparent 0px 2px,transparent 2px 4px,rgba(0,0,0,0.08) 4px 6px,rgba(255,190,110,0.06) 6px 10px,rgba(0,0,0,0.12) 10px 12px,rgba(255,190,110,0.06) 12px 13px,transparent 13px 15px,rgba(255,190,110,0.06) 15px 17px,rgba(255,190,110,0.06) 17px 19px,transparent 19px 20px,rgba(0,0,0,0.08) 20px 22px,transparent 22px 24px,transparent 24px 27px,rgba(0,0,0,0.12) 27px 31px,transparent 31px 32px)"></i><i style="left:288px;top:160px;width:32px;height:32px;background:#8A6A58"></i><i style="left:288px;top:160px;width:32px;height:32px;background:linear-gradient(90deg,transparent 0px 3px,rgba(0,0,0,0.08) 3px 4px,transparent 4px 6px,rgba(0,0,0,0.08) 6px 10px,transparent 10px 13px,rgba(0,0,0,0.08) 13px 17px,rgba(0,0,0,0.08) 17px 21px,transparent 21px 24px,rgba(0,0,0,0.08) 24px 25px,rgba(0,0,0,0.12) 25px 27px,rgba(0,0,0,0.12) 27px 31px,transparent 31px 32px)"></i><i style="left:288px;top:160px;width:32px;height:32px;background:linear-gradient(180deg,transparent 0px 1px,rgba(255,190,110,0.06) 1px 5px,rgba(0,0,0,0.12) 5px 8px,rgba(0,0,0,0.12) 8px 10px,transparent 10px 13px,rgba(255,190,110,0.06) 13px 17px,rgba(0,0,0,0.08) 17px 18px,rgba(255,190,110,0.06) 18px 20px,rgba(0,0,0,0.08) 20px 22px,rgba(255,190,110,0.06) 22px 24px,transparent 24px 28px,transparent 28px 30px,rgba(0,0,0,0.12) 30px 32px)"></i><i style="left:0px;top:192px;width:32px;height:4px;background:#2A2010"></i><i style="left:32px;top:192px;width:32px;height:4px;background:#0A0604"></i><i style="left:64px;top:192px;width:32px;height:4px;background:#0A0604"></i><i style="left:96px;top:192px;width:32px;height:4px;background:#8A7A50"></i><i style="left:128px;top:192px;width:32px;height:4px;background:#A08A60"></i><i style="left:160px;top:192px;width:32px;height:4px;background:#8A6048"></i><i style="left:192px;top:192px;width:32px;height:4px;background:#A05A40"></i><i style="left:224px;top:192px;width:32px;height:4px;background:#8A7A50"></i><i style="left:256px;top:192px;width:32px;height:4px;background:#6A7A40"></i><i style="left:288px;top:192px;width:32px;height:4px;background:#100A06"></i>
</div>
<div class="a" style="left:422px;top:271px;width:299px;height:56px;background:#ECE9D8"></div>
<div class="tt" style="left:544px;top:277px;letter-spacing:-0.45px">HEIZENBE</div>
<div class="a" style="left:422px;top:295px;width:299px;height:11px;background:#fff;border:1px solid #555;border-top-color:#4A4A4A;border-radius:3px"></div>
<div class="a" style="left:422px;top:327px;width:299px;height:140px;background:#ECE9D8"></div>
<div class="crow" style="top:327px"></div>
<div class="a" style="left:498px;top:327px;width:1px;height:6px;background:#EAE8DE"></div>
<div class="a" style="left:572px;top:327px;width:1px;height:6px;background:#EAE8DE"></div>
<div class="a" style="left:646px;top:327px;width:1px;height:6px;background:#EAE8DE"></div>
<div class="ctl" style="top:327px">Control 0</div>
<div class="cval" style="top:327px">0</div>
<div class="crow" style="top:345px"></div>
<div class="a" style="left:498px;top:345px;width:1px;height:6px;background:#EAE8DE"></div>
<div class="a" style="left:572px;top:345px;width:1px;height:6px;background:#EAE8DE"></div>
<div class="a" style="left:646px;top:345px;width:1px;height:6px;background:#EAE8DE"></div>
<div class="ctl" style="top:345px">Control 1</div>
<div class="cval" style="top:345px">26</div>
<div class="crow" style="top:363px"></div>
<div class="a" style="left:498px;top:363px;width:1px;height:6px;background:#EAE8DE"></div>
<div class="a" style="left:572px;top:363px;width:1px;height:6px;background:#EAE8DE"></div>
<div class="a" style="left:646px;top:363px;width:1px;height:6px;background:#EAE8DE"></div>
<div class="ctl" style="top:363px">Control 2</div>
<div class="cval" style="top:363px">0</div>
<div class="crow" style="top:381px"></div>
<div class="a" style="left:498px;top:381px;width:1px;height:6px;background:#EAE8DE"></div>
<div class="a" style="left:572px;top:381px;width:1px;height:6px;background:#EAE8DE"></div>
<div class="a" style="left:646px;top:381px;width:1px;height:6px;background:#EAE8DE"></div>
<div class="ctl" style="top:381px">Control 3</div>
<div class="cval" style="top:381px">0</div>
<div class="crow" style="top:399px"></div>
<div class="a" style="left:498px;top:399px;width:1px;height:6px;background:#EAE8DE"></div>
<div class="a" style="left:572px;top:399px;width:1px;height:6px;background:#EAE8DE"></div>
<div class="a" style="left:646px;top:399px;width:1px;height:6px;background:#EAE8DE"></div>
<div class="ctl" style="top:399px">Control 4</div>
<div class="cval" style="top:399px">0</div>
<div class="crow" style="top:417px"></div>
<div class="a" style="left:498px;top:417px;width:1px;height:6px;background:#EAE8DE"></div>
<div class="a" style="left:572px;top:417px;width:1px;height:6px;background:#EAE8DE"></div>
<div class="a" style="left:646px;top:417px;width:1px;height:6px;background:#EAE8DE"></div>
<div class="ctl" style="top:417px">Control 5</div>
<div class="cval" style="top:417px">0</div>
<div class="crow" style="top:435px"></div>
<div class="a" style="left:498px;top:435px;width:1px;height:6px;background:#EAE8DE"></div>
<div class="a" style="left:572px;top:435px;width:1px;height:6px;background:#EAE8DE"></div>
<div class="a" style="left:646px;top:435px;width:1px;height:6px;background:#EAE8DE"></div>
<div class="ctl" style="top:435px">Control 6</div>
<div class="cval" style="top:435px">0</div>
<div class="crow" style="top:453px"></div>
<div class="a" style="left:498px;top:453px;width:1px;height:6px;background:#EAE8DE"></div>
<div class="a" style="left:572px;top:453px;width:1px;height:6px;background:#EAE8DE"></div>
<div class="a" style="left:646px;top:453px;width:1px;height:6px;background:#EAE8DE"></div>
<div class="ctl" style="top:453px">Control 7</div>
<div class="cval" style="top:453px">0</div>
<div class="a" style="left:422px;top:469px;width:299px;height:28px;background:#ECE9D8"></div>
<div class="b" style="left:564px;top:480px">Randomize</div>
<div class="b" style="left:664px;top:480px">Reset</div>
<div class="a" style="left:721px;top:32px;width:4px;height:470px;background:#FAFAF6"></div>
<svg width="40" height="24" viewBox="0 0 40 24" style="position:absolute;left:662px;top:349px">
<path d="M4,9 C7,5 13,4 19,5 L31,2.5 C34,2 36,3 35,5.5 C34,7.5 30,8 24,9.5 C25,11 25,13 23,14 C24,16 23,18 21,19 C20,21 18,22 15,22 C10,22 5,20 3.5,16 C2.5,13 3,11 4,9 Z" fill="#FFE500" stroke="#4A2200" stroke-width="1.2"/>
<path d="M6,12 C8,15 10,18 15,20 M10,10 C12,12 13,15 16,17 M17,12 L22,12.5 M17,15.5 L22,15.5 M16,18.5 L20,19" fill="none" stroke="#7A4000" stroke-width="1"/>
<path d="M5,14 C6,18 10,21 15,21.5 C11,19 8,16 7,12 Z" fill="#F0A000"/>
</svg>
<div class="a" style="left:518.5px;top:418px;font-size:20.5px;letter-spacing:-0.6px;line-height:24px;color:#B8B8DA;text-shadow:1px 1px 0 #8E8EA6;white-space:nowrap">Pinuccia</div>
<div class="a" style="left:490px;top:441px;font-size:12.5px;letter-spacing:-0.2px;line-height:14px;color:#8E8EA2;white-space:nowrap">www.maidiregrafica.eu</div>

<div class="tt" style="left:8px;top:514px">Database:</div>
<div class="tt" style="left:65px;top:514px">ICNET-Filters</div>
<div class="tt" style="left:8px;top:526px">Filters:</div>
<div class="tt" style="left:65px;top:526px">1299</div>

<div class="btn" style="left:507px;box-shadow:inset 0 0 0 1px #A6C3F0, inset 0 0 0 2px #C9DAF8">Apply</div>
<div class="btn" style="left:583px">Cancel</div>
<div class="btn" style="left:660px">Help</div>
</body></html>
